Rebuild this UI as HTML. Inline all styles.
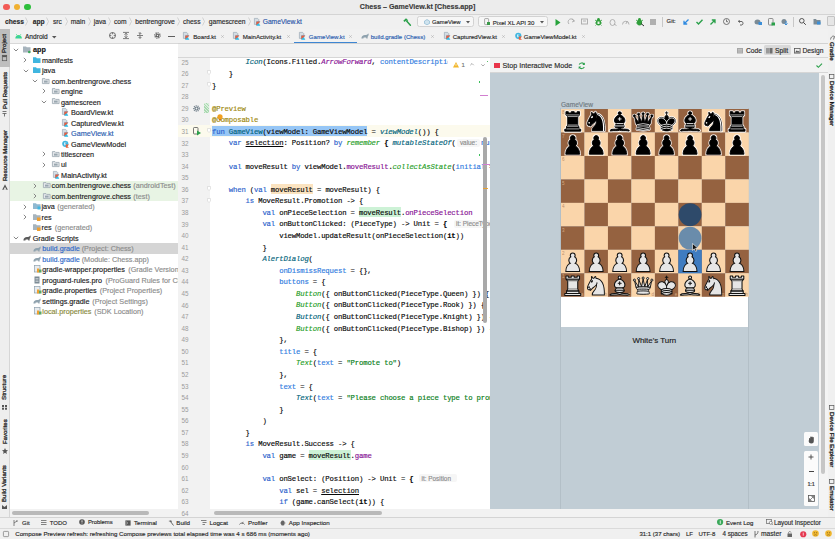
<!DOCTYPE html><html><head><meta charset="utf-8"><style>
*{margin:0;padding:0;box-sizing:border-box}
html,body{width:835px;height:539px;overflow:hidden;background:#f2f2f2}
body{position:relative;font-family:"Liberation Sans",sans-serif;}
.t{position:absolute;white-space:pre;line-height:1;margin-top:0.9px;-webkit-text-stroke:0.15px currentColor}
.v{margin-top:0;-webkit-text-stroke:0.3px currentColor}
.code{position:absolute;left:212px;font-family:"Liberation Mono",monospace;font-size:7.3px;letter-spacing:-0.18px;white-space:pre;color:#080808;line-height:11.56px;height:11.56px;padding-top:1.7px;-webkit-text-stroke:0.15px currentColor}
.k{color:#2b5fcc}.fd{color:#00627a}.an{color:#9e880d}.cg{color:#1f9d1f;font-style:italic}.ct{color:#00627a;font-style:italic}
.pr{color:#871094}.pri{color:#871094;font-style:italic}.na{color:#2f7be0}.st{color:#067d17}.b{font-weight:bold}.u{text-decoration:underline}
.ih{font-family:"Liberation Sans",sans-serif;font-size:6px;color:#8a8a8a;background:#ececec;border-radius:2px;padding:0 1px}
.ln{position:absolute;left:181.5px;width:10px;font-family:"Liberation Sans",sans-serif;font-size:6.3px;color:#9c9c9c;line-height:11.56px;text-align:left;padding-top:0.8px}
svg{position:absolute;overflow:visible}
</style></head><body><div style="position:absolute;left:0px;top:0px;width:835px;height:14.5px;background:#ececec"></div>
<div style="position:absolute;left:0px;top:14px;width:835px;height:0.6px;background:#d4d4d4"></div>
<div style="position:absolute;left:3.1px;top:3.6px;width:6.8px;height:6.8px;border-radius:50%;background:#f25a55"></div>
<div style="position:absolute;left:13.499999999999998px;top:3.6px;width:6.8px;height:6.8px;border-radius:50%;background:#f0b030"></div>
<div style="position:absolute;left:24.0px;top:3.6px;width:6.8px;height:6.8px;border-radius:50%;background:#2dbf3c"></div>
<div class="t " style="left:359.8px;top:3.0px;font-size:7.1px;color:#3a3a3a;font-weight:bold">Chess – GameView.kt [Chess.app]</div>
<div style="position:absolute;left:0px;top:14.5px;width:835px;height:14.5px;background:#f0f0f0"></div>
<div style="position:absolute;left:0px;top:28.6px;width:835px;height:0.8px;background:#d2d2d2"></div>
<div class="t " style="left:5px;top:17.7px;font-size:6.7px;color:#2b2b2b;font-weight:bold">chess</div>
<div class="t " style="left:32.7px;top:17.7px;font-size:6.7px;color:#2b2b2b;font-weight:bold">app</div>
<div class="t " style="left:53px;top:17.7px;font-size:6.7px;color:#2b2b2b;">src</div>
<div class="t " style="left:70.7px;top:17.7px;font-size:6.7px;color:#2b2b2b;">main</div>
<div class="t " style="left:93.8px;top:17.7px;font-size:6.7px;color:#2b2b2b;">java</div>
<div class="t " style="left:114px;top:17.7px;font-size:6.7px;color:#2b2b2b;">com</div>
<div class="t " style="left:135.3px;top:17.7px;font-size:6.7px;color:#2b2b2b;">bentrengrove</div>
<div class="t " style="left:183px;top:17.7px;font-size:6.7px;color:#2b2b2b;">chess</div>
<div class="t " style="left:208.7px;top:17.7px;font-size:6.7px;color:#2b2b2b;">gamescreen</div>
<svg style="left:25.0px;top:17px" width="3" height="9" viewBox="0 0 3 9"><path d="M0.5 0.5 L2.5 4.5 L0.5 8.5" fill="none" stroke="#c4c4c4" stroke-width="0.7"/></svg>
<svg style="left:45.5px;top:17px" width="3" height="9" viewBox="0 0 3 9"><path d="M0.5 0.5 L2.5 4.5 L0.5 8.5" fill="none" stroke="#c4c4c4" stroke-width="0.7"/></svg>
<svg style="left:64.5px;top:17px" width="3" height="9" viewBox="0 0 3 9"><path d="M0.5 0.5 L2.5 4.5 L0.5 8.5" fill="none" stroke="#c4c4c4" stroke-width="0.7"/></svg>
<svg style="left:87.5px;top:17px" width="3" height="9" viewBox="0 0 3 9"><path d="M0.5 0.5 L2.5 4.5 L0.5 8.5" fill="none" stroke="#c4c4c4" stroke-width="0.7"/></svg>
<svg style="left:107.5px;top:17px" width="3" height="9" viewBox="0 0 3 9"><path d="M0.5 0.5 L2.5 4.5 L0.5 8.5" fill="none" stroke="#c4c4c4" stroke-width="0.7"/></svg>
<svg style="left:128.5px;top:17px" width="3" height="9" viewBox="0 0 3 9"><path d="M0.5 0.5 L2.5 4.5 L0.5 8.5" fill="none" stroke="#c4c4c4" stroke-width="0.7"/></svg>
<svg style="left:177.1px;top:17px" width="3" height="9" viewBox="0 0 3 9"><path d="M0.5 0.5 L2.5 4.5 L0.5 8.5" fill="none" stroke="#c4c4c4" stroke-width="0.7"/></svg>
<svg style="left:201.5px;top:17px" width="3" height="9" viewBox="0 0 3 9"><path d="M0.5 0.5 L2.5 4.5 L0.5 8.5" fill="none" stroke="#c4c4c4" stroke-width="0.7"/></svg>
<svg style="left:247.5px;top:17px" width="3" height="9" viewBox="0 0 3 9"><path d="M0.5 0.5 L2.5 4.5 L0.5 8.5" fill="none" stroke="#c4c4c4" stroke-width="0.7"/></svg>
<svg style="left:254px;top:17.5px" width="6.5" height="8" viewBox="0 0 6.5 8"><path d="M0.4 0.4 H3.6 L4.8 1.6 V6.4 H0.4Z" fill="#d5dde3" stroke="#8ea0ad" stroke-width="0.6"/><path d="M2.3 3.6 H6.3 L4.3 5.6 L6.3 7.6 H2.3Z" fill="#2d9be8"/><path d="M2.3 3.6 H6.3 L2.3 7.6Z" fill="#e8603c"/><path d="M2.3 7.6 L4.3 5.6 L6.3 7.6Z" fill="#27c7e8"/></svg>
<div class="t " style="left:262.7px;top:17.7px;font-size:6.7px;color:#2a56a8;">GameView.kt</div>
<svg style="left:403px;top:17.5px" width="8" height="8" viewBox="0 0 8 8"><path d="M0.3 2.8 L3 0.3 L5.2 2.3 L4.4 3.1 L3.4 2.3 L1.6 4Z" fill="#2aa04a"/><path d="M3.6 3 L7.4 7.3" stroke="#2aa04a" stroke-width="1.5" stroke-linecap="round"/></svg>
<div style="position:absolute;left:417px;top:16px;width:57px;height:11px;background:#f7f7f7;border:0.6px solid #d2d2d2;border-radius:2.5px"></div>
<svg style="left:423.5px;top:18.5px" width="6" height="6" viewBox="0 0 6 6"><path d="M3 0.5 L5.5 2 V4.5 L3 5.8 L0.5 4.5 V2Z" fill="#cfe3ee" stroke="#7eb0cc" stroke-width="0.6"/></svg>
<div class="t " style="left:432px;top:19.0px;font-size:5.87px;color:#2b2b2b;">GameView</div>
<svg style="left:465.5px;top:20.5px" width="4" height="3" viewBox="0 0 4 3"><path d="M0 0 H4 L2 2.5Z" fill="#555"/></svg>
<div style="position:absolute;left:477.7px;top:16px;width:70px;height:11px;background:#f7f7f7;border:0.6px solid #d2d2d2;border-radius:2.5px"></div>
<svg style="left:484px;top:18px" width="6" height="7" viewBox="0 0 6 7"><rect x="0.6" y="0.6" width="4" height="6" rx="0.6" fill="none" stroke="#888" stroke-width="0.7"/><rect x="3" y="4" width="3" height="3" fill="#3b9a4a"/></svg>
<div class="t " style="left:492.8px;top:18.7px;font-size:6.07px;color:#2b2b2b;">Pixel XL API 30</div>
<svg style="left:539.5px;top:20.5px" width="4" height="3" viewBox="0 0 4 3"><path d="M0 0 H4 L2 2.5Z" fill="#555"/></svg>
<svg style="left:554.5px;top:18.5px" width="6" height="7" viewBox="0 0 6 7"><path d="M0.5 0 L5.5 3.5 L0.5 7Z" fill="#28a33c"/></svg>
<svg style="left:567.5px;top:18px" width="7" height="7" viewBox="0 0 7 7"><path d="M1 6 A3 3 0 1 1 6 3" fill="none" stroke="#a9a9a9" stroke-width="0.9"/><path d="M4 1 L6.5 3 L4 4" fill="none" stroke="#a9a9a9" stroke-width="0.9"/></svg>
<svg style="left:581px;top:18px" width="7" height="7" viewBox="0 0 7 7"><rect x="0.5" y="1" width="6" height="5" fill="none" stroke="#a9a9a9" stroke-width="0.9"/><path d="M2 3 H5" stroke="#a9a9a9" stroke-width="0.9"/></svg>
<svg style="left:594.5px;top:17.5px" width="7" height="8" viewBox="0 0 7 8"><ellipse cx="3.5" cy="4.5" rx="2.6" ry="3" fill="#2f9e3a"/><path d="M0 2 L1.5 3 M7 2 L5.5 3 M0 5 H1 M7 5 H6 M0.5 7.5 L1.5 6.5 M6.5 7.5 L5.5 6.5" stroke="#2f9e3a" stroke-width="0.8"/><circle cx="3.5" cy="1.2" r="1.3" fill="#2f9e3a"/><rect x="2.5" y="3.5" width="2" height="2.5" fill="#e8f5e8"/></svg>
<svg style="left:608.5px;top:17.5px" width="8" height="8" viewBox="0 0 8 8"><ellipse cx="3.5" cy="4.5" rx="2.5" ry="3" fill="none" stroke="#a9a9a9" stroke-width="0.9"/><path d="M5 6 L7.5 7.5" stroke="#a9a9a9" stroke-width="0.9"/></svg>
<svg style="left:622px;top:18.5px" width="8" height="6" viewBox="0 0 8 6"><path d="M0.5 5.5 A3.2 3.2 0 0 1 7 5.5" fill="none" stroke="#a9a9a9" stroke-width="0.9"/><path d="M3.8 5 L5.5 2" stroke="#a9a9a9" stroke-width="0.9"/></svg>
<svg style="left:635.5px;top:17.5px" width="8" height="8" viewBox="0 0 8 8"><ellipse cx="3.5" cy="4.5" rx="2.6" ry="3" fill="#2f9e3a"/><circle cx="3.5" cy="1.2" r="1.3" fill="#2f9e3a"/><path d="M0 2 L1.5 3 M7 2 L5.5 3 M0 5 H1" stroke="#2f9e3a" stroke-width="0.8"/><path d="M5 5.5 L8 8" stroke="#333" stroke-width="1"/></svg>
<div style="position:absolute;left:649.5px;top:18.5px;width:6.5px;height:6.5px;background:#b0b0b0"></div>
<div style="position:absolute;left:661.5px;top:16.5px;width:0.6px;height:10px;background:#c8c8c8"></div>
<div class="t " style="left:666.6px;top:18.5px;font-size:5.85px;color:#2b2b2b;">Git:</div>
<svg style="left:682.5px;top:18.5px" width="6" height="6" viewBox="0 0 6 6"><path d="M5.5 0.5 L1 5 M1 1.8 V5 H4.2" fill="none" stroke="#2f8ae0" stroke-width="1.3"/></svg>
<svg style="left:696px;top:18.5px" width="7" height="6" viewBox="0 0 7 6"><path d="M0.5 3 L2.5 5 L6.5 0.8" fill="none" stroke="#2aa04a" stroke-width="1.4"/></svg>
<svg style="left:710px;top:18.5px" width="6" height="6" viewBox="0 0 6 6"><path d="M0.5 5.5 L5 1 M1.8 1 H5 V4.2" fill="none" stroke="#2aa04a" stroke-width="1.3"/></svg>
<svg style="left:723px;top:18px" width="7" height="7" viewBox="0 0 7 7"><circle cx="3.5" cy="3.5" r="3" fill="none" stroke="#555" stroke-width="0.8"/><path d="M3.5 1.5 V3.7 H5" fill="none" stroke="#555" stroke-width="0.8"/></svg>
<svg style="left:737.5px;top:18.5px" width="7" height="6" viewBox="0 0 7 6"><path d="M1.5 1 L0.5 2.5 L2 3.5 M0.6 2.5 H4 A2 2 0 0 1 4 6 H2" fill="none" stroke="#555" stroke-width="0.9"/></svg>
<svg style="left:754px;top:18px" width="8" height="7" viewBox="0 0 8 7"><ellipse cx="3.5" cy="4" rx="3" ry="2.5" fill="#7c8b95"/><rect x="4.5" y="4" width="3.5" height="3" fill="#3c8fd8"/></svg>
<svg style="left:768px;top:17.5px" width="7" height="8" viewBox="0 0 7 8"><rect x="0.5" y="0.5" width="4.5" height="6.5" rx="0.8" fill="none" stroke="#777" stroke-width="0.8"/><rect x="3.5" y="4.5" width="3.5" height="3" fill="#2aa04a"/></svg>
<svg style="left:781px;top:17.5px" width="8" height="8" viewBox="0 0 8 8"><circle cx="3" cy="3.5" r="2.5" fill="#7c8b95"/><path d="M5 3 V7 M3.5 5.5 L5 7 L6.5 5.5" fill="none" stroke="#3c8fd8" stroke-width="1"/></svg>
<div style="position:absolute;left:793.3px;top:16.5px;width:0.6px;height:10px;background:#c8c8c8"></div>
<svg style="left:798.5px;top:18px" width="7" height="7" viewBox="0 0 7 7"><circle cx="2.8" cy="2.8" r="2.3" fill="none" stroke="#444" stroke-width="0.9"/><path d="M4.5 4.5 L6.8 6.8" stroke="#444" stroke-width="1"/></svg>
<svg style="left:812.5px;top:18px" width="8" height="7" viewBox="0 0 8 7"><path d="M0.5 1 H3 L3.7 2 H7.5 V6.5 H0.5Z" fill="#7c8b95"/><rect x="4" y="3.5" width="3.5" height="3" fill="#3c8fd8"/></svg>
<div style="position:absolute;left:826.5px;top:16px;width:8.5px;height:10px;background:#e6e6e6;border:0.6px solid #c4c4c4;border-radius:1px"></div>
<div style="position:absolute;left:0px;top:29.4px;width:10px;height:488px;background:#eeeeee"></div>
<div style="position:absolute;left:9.4px;top:29.4px;width:0.8px;height:488px;background:#d6d6d6"></div>
<div style="position:absolute;left:0px;top:29.2px;width:9.6px;height:37.5px;background:#bebebe"></div>
<div class="t v" style="left:1.4500000000000002px;top:52.8px;font-size:6.1px;color:#2a2a2a;transform-origin:0 0;transform:rotate(-90deg)">Project</div>
<svg style="left:2.2px;top:54.5px" width="5" height="6" viewBox="0 0 5 6"><rect x="0.3" y="0.3" width="4.4" height="5.4" fill="none" stroke="#555" stroke-width="0.7"/><rect x="0.3" y="0.3" width="4.4" height="1.8" fill="#555"/></svg>
<div class="t v" style="left:1.5px;top:109.3px;font-size:6.0px;color:#2a2a2a;transform-origin:0 0;transform:rotate(-90deg)">Pull Requests</div>
<svg style="left:2px;top:111.3px" width="5" height="6" viewBox="0 0 5 6"><path d="M0.5 0.5 H4.5 M0.5 2.5 H4.5 M2.5 2.5 V5.5" stroke="#555" stroke-width="0.8"/></svg>
<div class="t v" style="left:1.5px;top:181px;font-size:6.0px;color:#2a2a2a;transform-origin:0 0;transform:rotate(-90deg)">Resource Manager</div>
<svg style="left:1.5px;top:184px" width="6" height="6" viewBox="0 0 6 6"><path d="M3 0.3 L5.8 5.7 H0.2Z" fill="#555"/><path d="M3 3 L1.5 5.7 H4.5Z" fill="#f0f0f0"/></svg>
<div class="t v" style="left:1.4px;top:399.8px;font-size:6.2px;color:#2a2a2a;transform-origin:0 0;transform:rotate(-90deg)">Structure</div>
<svg style="left:2px;top:405px" width="5" height="4.5" viewBox="0 0 5 4.5"><rect x="0" y="0" width="2" height="2" fill="#555"/><rect x="3" y="0" width="2" height="2" fill="#555"/><rect x="0" y="2.7" width="2" height="2" fill="#555"/><rect x="3" y="2.7" width="2" height="2" fill="#555"/></svg>
<div class="t v" style="left:1.5px;top:444.2px;font-size:6.0px;color:#2a2a2a;transform-origin:0 0;transform:rotate(-90deg)">Favorites</div>
<svg style="left:1.8px;top:447.5px" width="6" height="6" viewBox="0 0 6 6"><path d="M3 0 L3.9 2.1 L6 2.3 L4.4 3.7 L4.9 6 L3 4.8 L1.1 6 L1.6 3.7 L0 2.3 L2.1 2.1Z" fill="#555"/></svg>
<div class="t v" style="left:1.475px;top:501.7px;font-size:6.05px;color:#2a2a2a;transform-origin:0 0;transform:rotate(-90deg)">Build Variants</div>
<svg style="left:2px;top:504.7px" width="5" height="4" viewBox="0 0 5 4"><path d="M0 0 L2.5 2 L5 0 V4 H0Z" fill="#555"/></svg>
<div style="position:absolute;left:10.2px;top:29.4px;width:168px;height:14.1px;background:#f1f1f1"></div>
<div style="position:absolute;left:10.2px;top:43.2px;width:168px;height:0.6px;background:#d8d8d8"></div>
<svg style="left:15px;top:34.2px" width="7.2" height="4.8" viewBox="0 0 7.2 4.8"><path d="M0.3 4.6 C0.3 2.3 1.8 1 3.6 1 C5.4 1 6.9 2.3 6.9 4.6Z" fill="#3ddc84"/><path d="M1.2 0 L2 1.3 M6 0 L5.2 1.3" stroke="#3ddc84" stroke-width="0.6"/><circle cx="2.4" cy="3.2" r="0.6" fill="#40a8e0"/><circle cx="4.8" cy="3.2" r="0.6" fill="#40a8e0"/></svg>
<div class="t " style="left:24.9px;top:33.0px;font-size:6.64px;color:#2b2b2b;">Android</div>
<svg style="left:52px;top:36px" width="5" height="3" viewBox="0 0 5 3"><path d="M0 0 H4.5 L2.25 2.5Z" fill="#555"/></svg>
<svg style="left:109px;top:32.4px" width="7" height="7" viewBox="0 0 7 7"><circle cx="3.5" cy="3.5" r="3" fill="none" stroke="#5f5f5f" stroke-width="0.9"/><path d="M3.5 0.5 V2.3 M3.5 4.7 V6.5 M0.5 3.5 H2.3 M4.7 3.5 H6.5" stroke="#5f5f5f" stroke-width="0.8"/></svg>
<svg style="left:123px;top:32.4px" width="6" height="7" viewBox="0 0 6 7"><path d="M0 0.4 H6 M0 6.6 H6 M3 1.2 V5.8 M1.5 2.7 L3 1.2 L4.5 2.7 M1.5 4.3 L3 5.8 L4.5 4.3" fill="none" stroke="#5f5f5f" stroke-width="0.8"/></svg>
<svg style="left:137px;top:32.4px" width="6" height="7" viewBox="0 0 6 7"><path d="M0 3.5 H6 M3 0 V2.4 M1.6 1 L3 2.4 L4.4 1 M3 7 V4.6 M1.6 6 L3 4.6 L4.4 6" fill="none" stroke="#5f5f5f" stroke-width="0.8"/></svg>
<svg style="left:153.5px;top:32.3px" width="7" height="7" viewBox="0 0 7 7"><circle cx="3.5" cy="3.5" r="1.3" fill="none" stroke="#5f5f5f" stroke-width="1.1"/><circle cx="3.5" cy="3.5" r="2.6" fill="none" stroke="#5f5f5f" stroke-width="1.4" stroke-dasharray="1.1 0.9"/></svg>
<div style="position:absolute;left:168px;top:35.6px;width:6.5px;height:0.9px;background:#5f5f5f"></div>
<div style="position:absolute;left:10.2px;top:43.8px;width:168px;height:465.6px;background:#ffffff"></div>
<div style="position:absolute;left:10.2px;top:509.4px;width:168px;height:7.8px;background:#f2f2f2"></div>
<div style="position:absolute;left:12.2px;top:511px;width:136.5px;height:3.8px;background:#b9b9b9;border-radius:2px"></div>
<div style="position:absolute;left:10.2px;top:180.51000000000002px;width:168px;height:20.94px;background:#e8f4e4"></div>
<div style="position:absolute;left:10.2px;top:243.43px;width:168px;height:10.47px;background:#d5d5d5"></div>
<svg style="left:13.3px;top:47.6px" width="6" height="4" viewBox="0 0 6 4"><path d="M0.8 0.8 L3 3 L5.2 0.8" fill="none" stroke="#7a7a7a" stroke-width="0.9"/></svg>
<svg style="left:23.2px;top:45.800000000000004px" width="8" height="7.5" viewBox="0 0 8 7.5"><path d="M0 0.5 H3 L3.8 1.3 H7.5 V6.5 H0Z" fill="#a7b4bd"/><circle cx="6.3" cy="6" r="1.3" fill="#3aa85a"/></svg>
<div class="t " style="left:33px;top:45.4px;font-size:7.25px;color:#111;font-weight:bold">app</div>
<svg style="left:23px;top:57.07px" width="4" height="6" viewBox="0 0 4 6"><path d="M0.8 0.8 L3 3 L0.8 5.2" fill="none" stroke="#7a7a7a" stroke-width="0.9"/></svg>
<svg style="left:32.7px;top:56.57px" width="7.5" height="6" viewBox="0 0 7.5 6"><path d="M0 0.3 H3 L3.8 1.2 H7.5 V6 H0 Z" fill="#40b6e0"/></svg>
<div class="t " style="left:41.9px;top:55.87px;font-size:7.25px;color:#222;">manifests</div>
<svg style="left:22.6px;top:68.54px" width="6" height="4" viewBox="0 0 6 4"><path d="M0.8 0.8 L3 3 L5.2 0.8" fill="none" stroke="#7a7a7a" stroke-width="0.9"/></svg>
<svg style="left:32.7px;top:67.04px" width="7.5" height="6" viewBox="0 0 7.5 6"><path d="M0 0.3 H3 L3.8 1.2 H7.5 V6 H0 Z" fill="#40b6e0"/></svg>
<div class="t " style="left:41.9px;top:66.34px;font-size:7.25px;color:#222;">java</div>
<svg style="left:32.2px;top:79.01px" width="6" height="4" viewBox="0 0 6 4"><path d="M0.8 0.8 L3 3 L5.2 0.8" fill="none" stroke="#7a7a7a" stroke-width="0.9"/></svg>
<svg style="left:42.3px;top:77.51px" width="7.5" height="6" viewBox="0 0 7.5 6"><path d="M0.4 0.6 H3 L3.7 1.4 H7.1 V5.6 H0.4 Z" fill="#e3e6ea" stroke="#9aa7b0" stroke-width="0.8"/><rect x="2" y="2.6" width="3.6" height="2" fill="#9aa7b0"/></svg>
<div class="t " style="left:51.7px;top:76.81px;font-size:7.25px;color:#222;">com.bentrengrove.chess</div>
<svg style="left:42.3px;top:88.48px" width="4" height="6" viewBox="0 0 4 6"><path d="M0.8 0.8 L3 3 L0.8 5.2" fill="none" stroke="#7a7a7a" stroke-width="0.9"/></svg>
<svg style="left:52.1px;top:87.98px" width="7.5" height="6" viewBox="0 0 7.5 6"><path d="M0.4 0.6 H3 L3.7 1.4 H7.1 V5.6 H0.4 Z" fill="#e3e6ea" stroke="#9aa7b0" stroke-width="0.8"/><rect x="2" y="2.6" width="3.6" height="2" fill="#9aa7b0"/></svg>
<div class="t " style="left:61px;top:87.28px;font-size:7.25px;color:#222;">engine</div>
<svg style="left:41.3px;top:99.95px" width="6" height="4" viewBox="0 0 6 4"><path d="M0.8 0.8 L3 3 L5.2 0.8" fill="none" stroke="#7a7a7a" stroke-width="0.9"/></svg>
<svg style="left:52.1px;top:98.45px" width="7.5" height="6" viewBox="0 0 7.5 6"><path d="M0.4 0.6 H3 L3.7 1.4 H7.1 V5.6 H0.4 Z" fill="#e3e6ea" stroke="#9aa7b0" stroke-width="0.8"/><rect x="2" y="2.6" width="3.6" height="2" fill="#9aa7b0"/></svg>
<div class="t " style="left:61px;top:97.75px;font-size:7.25px;color:#222;">gamescreen</div>
<svg style="left:62px;top:108.42000000000002px" width="6.5" height="8" viewBox="0 0 6.5 8"><path d="M0.4 0.4 H3.6 L4.8 1.6 V6.4 H0.4Z" fill="#d5dde3" stroke="#8ea0ad" stroke-width="0.6"/><path d="M2.3 3.6 H6.3 L4.3 5.6 L6.3 7.6 H2.3Z" fill="#2d9be8"/><path d="M2.3 3.6 H6.3 L2.3 7.6Z" fill="#e8603c"/><path d="M2.3 7.6 L4.3 5.6 L6.3 7.6Z" fill="#27c7e8"/></svg>
<div class="t " style="left:71px;top:108.22000000000001px;font-size:7.25px;color:#222;">BoardView.kt</div>
<svg style="left:62px;top:118.89000000000001px" width="6.5" height="8" viewBox="0 0 6.5 8"><path d="M0.4 0.4 H3.6 L4.8 1.6 V6.4 H0.4Z" fill="#d5dde3" stroke="#8ea0ad" stroke-width="0.6"/><path d="M2.3 3.6 H6.3 L4.3 5.6 L6.3 7.6 H2.3Z" fill="#2d9be8"/><path d="M2.3 3.6 H6.3 L2.3 7.6Z" fill="#e8603c"/><path d="M2.3 7.6 L4.3 5.6 L6.3 7.6Z" fill="#27c7e8"/></svg>
<div class="t " style="left:71px;top:118.69000000000001px;font-size:7.25px;color:#222;">CapturedView.kt</div>
<svg style="left:62px;top:129.36px" width="6.5" height="8" viewBox="0 0 6.5 8"><path d="M0.4 0.4 H3.6 L4.8 1.6 V6.4 H0.4Z" fill="#d5dde3" stroke="#8ea0ad" stroke-width="0.6"/><path d="M2.3 3.6 H6.3 L4.3 5.6 L6.3 7.6 H2.3Z" fill="#2d9be8"/><path d="M2.3 3.6 H6.3 L2.3 7.6Z" fill="#e8603c"/><path d="M2.3 7.6 L4.3 5.6 L6.3 7.6Z" fill="#27c7e8"/></svg>
<div class="t " style="left:71px;top:129.16000000000003px;font-size:7.25px;color:#2a5db0;">GameView.kt</div>
<svg style="left:62px;top:139.83px" width="7" height="8" viewBox="0 0 7 8"><circle cx="3.3" cy="3.8" r="3.1" fill="#40b6e0"/><path d="M2.5 2.3 V5.3 M2.5 3.8 L4.3 2.3 M2.5 3.8 L4.3 5.3" stroke="#fff" stroke-width="0.6" fill="none"/><path d="M3.8 4.6 H7 L5.4 6.2 L7 7.8 H3.8Z" fill="#e8603c"/></svg>
<div class="t " style="left:71px;top:139.63000000000002px;font-size:7.25px;color:#222;">GameViewModel</div>
<svg style="left:42.3px;top:151.3px" width="4" height="6" viewBox="0 0 4 6"><path d="M0.8 0.8 L3 3 L0.8 5.2" fill="none" stroke="#7a7a7a" stroke-width="0.9"/></svg>
<svg style="left:52.1px;top:150.8px" width="7.5" height="6" viewBox="0 0 7.5 6"><path d="M0.4 0.6 H3 L3.7 1.4 H7.1 V5.6 H0.4 Z" fill="#e3e6ea" stroke="#9aa7b0" stroke-width="0.8"/><rect x="2" y="2.6" width="3.6" height="2" fill="#9aa7b0"/></svg>
<div class="t " style="left:61px;top:150.10000000000002px;font-size:7.25px;color:#222;">titlescreen</div>
<svg style="left:42.3px;top:161.77px" width="4" height="6" viewBox="0 0 4 6"><path d="M0.8 0.8 L3 3 L0.8 5.2" fill="none" stroke="#7a7a7a" stroke-width="0.9"/></svg>
<svg style="left:52.1px;top:161.27px" width="7.5" height="6" viewBox="0 0 7.5 6"><path d="M0.4 0.6 H3 L3.7 1.4 H7.1 V5.6 H0.4 Z" fill="#e3e6ea" stroke="#9aa7b0" stroke-width="0.8"/><rect x="2" y="2.6" width="3.6" height="2" fill="#9aa7b0"/></svg>
<div class="t " style="left:61px;top:160.57000000000002px;font-size:7.25px;color:#222;">ui</div>
<svg style="left:52.8px;top:171.24px" width="6.5" height="8" viewBox="0 0 6.5 8"><path d="M0.4 0.4 H3.6 L4.8 1.6 V6.4 H0.4Z" fill="#d5dde3" stroke="#8ea0ad" stroke-width="0.6"/><path d="M2.3 3.6 H6.3 L4.3 5.6 L6.3 7.6 H2.3Z" fill="#2d9be8"/><path d="M2.3 3.6 H6.3 L2.3 7.6Z" fill="#e8603c"/><path d="M2.3 7.6 L4.3 5.6 L6.3 7.6Z" fill="#27c7e8"/></svg>
<div class="t " style="left:61.1px;top:171.04000000000002px;font-size:7.25px;color:#222;">MainActivity.kt</div>
<svg style="left:33.2px;top:182.71px" width="4" height="6" viewBox="0 0 4 6"><path d="M0.8 0.8 L3 3 L0.8 5.2" fill="none" stroke="#7a7a7a" stroke-width="0.9"/></svg>
<svg style="left:42.8px;top:182.21px" width="7.5" height="6" viewBox="0 0 7.5 6"><path d="M0.4 0.6 H3 L3.7 1.4 H7.1 V5.6 H0.4 Z" fill="#e3e6ea" stroke="#9aa7b0" stroke-width="0.8"/><rect x="2" y="2.6" width="3.6" height="2" fill="#9aa7b0"/></svg>
<div class="t " style="left:51.6px;top:181.51000000000002px;font-size:7.25px;color:#222;">com.bentrengrove.chess</div><div class="t " style="left:133.3px;top:181.51000000000002px;font-size:7.25px;color:#8c8c8c;">(androidTest)</div>
<svg style="left:33.2px;top:193.18px" width="4" height="6" viewBox="0 0 4 6"><path d="M0.8 0.8 L3 3 L0.8 5.2" fill="none" stroke="#7a7a7a" stroke-width="0.9"/></svg>
<svg style="left:42.8px;top:192.68px" width="7.5" height="6" viewBox="0 0 7.5 6"><path d="M0.4 0.6 H3 L3.7 1.4 H7.1 V5.6 H0.4 Z" fill="#e3e6ea" stroke="#9aa7b0" stroke-width="0.8"/><rect x="2" y="2.6" width="3.6" height="2" fill="#9aa7b0"/></svg>
<div class="t " style="left:51.6px;top:191.98000000000002px;font-size:7.25px;color:#222;">com.bentrengrove.chess</div><div class="t " style="left:133.3px;top:191.98000000000002px;font-size:7.25px;color:#8c8c8c;">(test)</div>
<svg style="left:23.2px;top:203.65px" width="4" height="6" viewBox="0 0 4 6"><path d="M0.8 0.8 L3 3 L0.8 5.2" fill="none" stroke="#7a7a7a" stroke-width="0.9"/></svg>
<svg style="left:32.7px;top:203.15px" width="8" height="7" viewBox="0 0 8 7"><path d="M0 0.3 H3 L3.8 1.2 H7.5 V6 H0Z" fill="#8fb8d0"/><rect x="4.5" y="3.5" width="3" height="3" fill="#40b6e0"/></svg>
<div class="t " style="left:41.5px;top:202.45000000000002px;font-size:7.25px;color:#222;">java</div><div class="t " style="left:57.3px;top:202.45000000000002px;font-size:7.25px;color:#8c8c8c;">(generated)</div>
<svg style="left:23.2px;top:214.12px" width="4" height="6" viewBox="0 0 4 6"><path d="M0.8 0.8 L3 3 L0.8 5.2" fill="none" stroke="#7a7a7a" stroke-width="0.9"/></svg>
<svg style="left:32.7px;top:213.62px" width="8" height="7" viewBox="0 0 8 7"><path d="M0 0.3 H3 L3.8 1.2 H7.5 V6 H0Z" fill="#a7b4bd"/><rect x="4" y="3.5" width="3.5" height="3.5" fill="#f0a030"/></svg>
<div class="t " style="left:41.5px;top:212.92000000000002px;font-size:7.25px;color:#222;">res</div>
<svg style="left:32.7px;top:224.09px" width="8" height="7" viewBox="0 0 8 7"><path d="M0 0.3 H3 L3.8 1.2 H7.5 V6 H0Z" fill="#a7b4bd"/><rect x="4" y="3.5" width="3.5" height="3.5" fill="#f0a030"/></svg>
<div class="t " style="left:41.5px;top:223.39000000000001px;font-size:7.25px;color:#222;">res</div><div class="t " style="left:54.8px;top:223.39000000000001px;font-size:7.25px;color:#8c8c8c;">(generated)</div>
<svg style="left:13.3px;top:236.06px" width="6" height="4" viewBox="0 0 6 4"><path d="M0.8 0.8 L3 3 L5.2 0.8" fill="none" stroke="#7a7a7a" stroke-width="0.9"/></svg>
<svg style="left:23.1px;top:235.06px" width="8" height="6" viewBox="0 0 8 6"><path d="M0.4 5.6 C0.4 3.2 1.9 1.9 4 1.9 C5.3 1.9 6.2 2.2 6.6 1.1 L7.6 0.5 C7.9 1.9 7.2 3.1 6.6 3.7 L6.6 5.6 H5.4 L5.1 4.4 H2.7 L2.4 5.6Z" fill="#5a5a5a"/></svg>
<div class="t " style="left:32.7px;top:233.86px;font-size:7.25px;color:#222;">Gradle Scripts</div>
<svg style="left:32.7px;top:245.53px" width="8" height="6" viewBox="0 0 8 6"><path d="M0.4 5.6 C0.4 3.2 1.9 1.9 4 1.9 C5.3 1.9 6.2 2.2 6.6 1.1 L7.6 0.5 C7.9 1.9 7.2 3.1 6.6 3.7 L6.6 5.6 H5.4 L5.1 4.4 H2.7 L2.4 5.6Z" fill="#8fa2ae"/></svg>
<div class="t " style="left:42.3px;top:244.33px;font-size:7.25px;color:#2f68c8;">build.gradle</div><div class="t " style="left:81.7px;top:244.33px;font-size:7.25px;color:#8c8c8c;">(Project: Chess)</div>
<svg style="left:32.7px;top:256.0px" width="8" height="6" viewBox="0 0 8 6"><path d="M0.4 5.6 C0.4 3.2 1.9 1.9 4 1.9 C5.3 1.9 6.2 2.2 6.6 1.1 L7.6 0.5 C7.9 1.9 7.2 3.1 6.6 3.7 L6.6 5.6 H5.4 L5.1 4.4 H2.7 L2.4 5.6Z" fill="#8fa2ae"/></svg>
<div class="t " style="left:42.3px;top:254.8px;font-size:7.25px;color:#2f68c8;">build.gradle</div><div class="t " style="left:81.7px;top:254.8px;font-size:7.25px;color:#8c8c8c;">(Module: Chess.app)</div>
<svg style="left:34px;top:265.47px" width="8" height="8" viewBox="0 0 8 8"><rect x="0.5" y="0.5" width="5.5" height="6.5" fill="#e8ecef" stroke="#8ea0ad" stroke-width="0.7"/><rect x="3" y="3.5" width="2" height="4" fill="#f0a030"/><rect x="5" y="4.5" width="2.5" height="3" fill="#59a869"/></svg>
<div class="t " style="left:42.3px;top:265.27000000000004px;font-size:7.25px;color:#222;">gradle-wrapper.properties</div><div class="t " style="left:128.3px;top:265.27000000000004px;font-size:7.25px;color:#8c8c8c;">(Gradle Version</div>
<svg style="left:34px;top:275.94px" width="6" height="8" viewBox="0 0 6 8"><rect x="0.5" y="0.5" width="5" height="7" fill="#7c8b95"/><path d="M1.5 2.5 H4.5 M1.5 4 H4.5 M1.5 5.5 H4.5" stroke="#fff" stroke-width="0.5"/></svg>
<div class="t " style="left:42.3px;top:275.74px;font-size:7.25px;color:#222;">proguard-rules.pro</div><div class="t " style="left:105.6px;top:275.74px;font-size:7.25px;color:#8c8c8c;">(ProGuard Rules for Chess.app)</div>
<svg style="left:34px;top:286.41px" width="8" height="8" viewBox="0 0 8 8"><rect x="0.5" y="0.5" width="5.5" height="6.5" fill="#e8ecef" stroke="#8ea0ad" stroke-width="0.7"/><rect x="3" y="3.5" width="2" height="4" fill="#f0a030"/><rect x="5" y="4.5" width="2.5" height="3" fill="#59a869"/></svg>
<div class="t " style="left:42.3px;top:286.21000000000004px;font-size:7.25px;color:#222;">gradle.properties</div><div class="t " style="left:99.8px;top:286.21000000000004px;font-size:7.25px;color:#8c8c8c;">(Project Properties)</div>
<svg style="left:32.7px;top:297.88000000000005px" width="8" height="6" viewBox="0 0 8 6"><path d="M0.4 5.6 C0.4 3.2 1.9 1.9 4 1.9 C5.3 1.9 6.2 2.2 6.6 1.1 L7.6 0.5 C7.9 1.9 7.2 3.1 6.6 3.7 L6.6 5.6 H5.4 L5.1 4.4 H2.7 L2.4 5.6Z" fill="#8fa2ae"/></svg>
<div class="t " style="left:42.3px;top:296.68000000000006px;font-size:7.25px;color:#222;">settings.gradle</div><div class="t " style="left:92.3px;top:296.68000000000006px;font-size:7.25px;color:#8c8c8c;">(Project Settings)</div>
<svg style="left:34px;top:307.35px" width="8" height="8" viewBox="0 0 8 8"><rect x="0.5" y="0.5" width="5.5" height="6.5" fill="#e8ecef" stroke="#8ea0ad" stroke-width="0.7"/><rect x="3" y="3.5" width="2" height="4" fill="#f0a030"/><rect x="5" y="4.5" width="2.5" height="3" fill="#59a869"/></svg>
<div class="t " style="left:42.3px;top:307.15000000000003px;font-size:7.25px;color:#8a8a3c;">local.properties</div><div class="t " style="left:94.3px;top:307.15000000000003px;font-size:7.25px;color:#8c8c8c;">(SDK Location)</div>
<div style="position:absolute;left:177.6px;top:29px;width:0.8px;height:488px;background:#d4d4d4"></div>
<div style="position:absolute;left:178.4px;top:29.4px;width:649.6px;height:13.9px;background:#f1f1f1"></div>
<div style="position:absolute;left:178.4px;top:43px;width:649.6px;height:0.6px;background:#d2d2d2"></div>
<svg style="left:183.2px;top:32.2px" width="6.5" height="8" viewBox="0 0 6.5 8"><path d="M0.4 0.4 H3.6 L4.8 1.6 V6.4 H0.4Z" fill="#d5dde3" stroke="#8ea0ad" stroke-width="0.6"/><path d="M2.3 3.6 H6.3 L4.3 5.6 L6.3 7.6 H2.3Z" fill="#2d9be8"/><path d="M2.3 3.6 H6.3 L2.3 7.6Z" fill="#e8603c"/><path d="M2.3 7.6 L4.3 5.6 L6.3 7.6Z" fill="#27c7e8"/></svg>
<div class="t " style="left:193.3px;top:32.9px;font-size:6.1px;color:#2b2b2b;">Board.kt</div>
<svg style="left:220.5px;top:34.7px" width="3" height="3" viewBox="0 0 3 3"><path d="M0.2 0.2 L2.8 2.8 M2.8 0.2 L0.2 2.8" stroke="#b0b0b0" stroke-width="0.6"/></svg>
<svg style="left:233px;top:32.2px" width="6.5" height="8" viewBox="0 0 6.5 8"><path d="M0.4 0.4 H3.6 L4.8 1.6 V6.4 H0.4Z" fill="#d5dde3" stroke="#8ea0ad" stroke-width="0.6"/><path d="M2.3 3.6 H6.3 L4.3 5.6 L6.3 7.6 H2.3Z" fill="#2d9be8"/><path d="M2.3 3.6 H6.3 L2.3 7.6Z" fill="#e8603c"/><path d="M2.3 7.6 L4.3 5.6 L6.3 7.6Z" fill="#27c7e8"/></svg>
<div class="t " style="left:242.7px;top:32.9px;font-size:6.1px;color:#2b2b2b;">MainActivity.kt</div>
<svg style="left:287.0px;top:34.7px" width="3" height="3" viewBox="0 0 3 3"><path d="M0.2 0.2 L2.8 2.8 M2.8 0.2 L0.2 2.8" stroke="#b0b0b0" stroke-width="0.6"/></svg>
<svg style="left:299px;top:32.2px" width="6.5" height="8" viewBox="0 0 6.5 8"><path d="M0.4 0.4 H3.6 L4.8 1.6 V6.4 H0.4Z" fill="#d5dde3" stroke="#8ea0ad" stroke-width="0.6"/><path d="M2.3 3.6 H6.3 L4.3 5.6 L6.3 7.6 H2.3Z" fill="#2d9be8"/><path d="M2.3 3.6 H6.3 L2.3 7.6Z" fill="#e8603c"/><path d="M2.3 7.6 L4.3 5.6 L6.3 7.6Z" fill="#27c7e8"/></svg>
<div class="t " style="left:308.8px;top:32.9px;font-size:6.1px;color:#2a5db0;">GameView.kt</div>
<svg style="left:349.0px;top:34.7px" width="3" height="3" viewBox="0 0 3 3"><path d="M0.2 0.2 L2.8 2.8 M2.8 0.2 L0.2 2.8" stroke="#b0b0b0" stroke-width="0.6"/></svg>
<svg style="left:361px;top:33.2px" width="8" height="6" viewBox="0 0 8 6"><path d="M0.4 5.6 C0.4 3.2 1.9 1.9 4 1.9 C5.3 1.9 6.2 2.2 6.6 1.1 L7.6 0.5 C7.9 1.9 7.2 3.1 6.6 3.7 L6.6 5.6 H5.4 L5.1 4.4 H2.7 L2.4 5.6Z" fill="#8fa2ae"/></svg>
<div class="t " style="left:370.7px;top:32.9px;font-size:6.1px;color:#2a5db0;">build.gradle (Chess)</div>
<svg style="left:430.5px;top:34.7px" width="3" height="3" viewBox="0 0 3 3"><path d="M0.2 0.2 L2.8 2.8 M2.8 0.2 L0.2 2.8" stroke="#b0b0b0" stroke-width="0.6"/></svg>
<svg style="left:443.8px;top:32.2px" width="6.5" height="8" viewBox="0 0 6.5 8"><path d="M0.4 0.4 H3.6 L4.8 1.6 V6.4 H0.4Z" fill="#d5dde3" stroke="#8ea0ad" stroke-width="0.6"/><path d="M2.3 3.6 H6.3 L4.3 5.6 L6.3 7.6 H2.3Z" fill="#2d9be8"/><path d="M2.3 3.6 H6.3 L2.3 7.6Z" fill="#e8603c"/><path d="M2.3 7.6 L4.3 5.6 L6.3 7.6Z" fill="#27c7e8"/></svg>
<div class="t " style="left:452.7px;top:32.9px;font-size:6.1px;color:#2b2b2b;">CapturedView.kt</div>
<svg style="left:501.5px;top:34.7px" width="3" height="3" viewBox="0 0 3 3"><path d="M0.2 0.2 L2.8 2.8 M2.8 0.2 L0.2 2.8" stroke="#b0b0b0" stroke-width="0.6"/></svg>
<svg style="left:515px;top:32.2px" width="7" height="8" viewBox="0 0 7 8"><circle cx="3.3" cy="3.8" r="3.1" fill="#40b6e0"/><path d="M2.5 2.3 V5.3 M2.5 3.8 L4.3 2.3 M2.5 3.8 L4.3 5.3" stroke="#fff" stroke-width="0.6" fill="none"/><path d="M3.8 4.6 H7 L5.4 6.2 L7 7.8 H3.8Z" fill="#e8603c"/></svg>
<div class="t " style="left:523.8px;top:32.9px;font-size:6.1px;color:#2b2b2b;">GameViewModel.kt</div>
<svg style="left:581.5px;top:34.7px" width="3" height="3" viewBox="0 0 3 3"><path d="M0.2 0.2 L2.8 2.8 M2.8 0.2 L0.2 2.8" stroke="#b0b0b0" stroke-width="0.6"/></svg>
<div style="position:absolute;left:294px;top:41.6px;width:62.5px;height:1.6px;background:#3e86d2"></div>
<div style="position:absolute;left:178.4px;top:43.6px;width:649.6px;height:14.1px;background:#f2f2f2"></div>
<div style="position:absolute;left:178.4px;top:57.3px;width:649.6px;height:0.6px;background:#d6d6d6"></div>
<svg style="left:737.2px;top:47.5px" width="6" height="5.5" viewBox="0 0 6 5.5"><rect x="0" y="0" width="6" height="5.5" fill="#a6a6a6"/><path d="M1 1.5 H5 M1 2.8 H5 M1 4.1 H5" stroke="#dcdcdc" stroke-width="0.5"/></svg>
<div class="t " style="left:745.9px;top:46.8px;font-size:6.73px;color:#2b2b2b;">Code</div>
<div style="position:absolute;left:764px;top:45.3px;width:26.7px;height:10px;background:#d9d9d9;border-radius:1.5px"></div>
<svg style="left:766.2px;top:47.5px" width="6.5" height="5.5" viewBox="0 0 6.5 5.5"><rect x="0" y="0" width="3" height="5.5" fill="#9a9a9a"/><rect x="3.5" y="0" width="3" height="5.5" fill="#6f6f6f"/></svg>
<div class="t " style="left:775px;top:46.8px;font-size:6.73px;color:#2b2b2b;">Split</div>
<svg style="left:794px;top:47.5px" width="6.5" height="5.5" viewBox="0 0 6.5 5.5"><rect x="0.4" y="0.4" width="5.7" height="4.7" fill="none" stroke="#555" stroke-width="0.8"/><path d="M1 4.5 L2.8 2.3 L4 3.5 L5 2.8 L5.8 4.5Z" fill="#555"/></svg>
<div class="t " style="left:802.5px;top:46.8px;font-size:6.73px;color:#2b2b2b;">Design</div>
<div style="position:absolute;left:178.4px;top:57.9px;width:311.4px;height:451.5px;background:#ffffff"></div>
<div style="position:absolute;left:178.4px;top:57.9px;width:31.6px;height:451.5px;background:#f2f2f2"></div>
<div style="position:absolute;left:178.4px;top:509.4px;width:311.4px;height:7.8px;background:#f2f2f2"></div>
<div style="position:absolute;left:178.4px;top:509.4px;width:31.6px;height:7.6px;background:#f2f2f2"></div>
<div style="position:absolute;left:214px;top:511px;width:168px;height:3.8px;background:#b9b9b9;border-radius:2px"></div>
<div style="position:absolute;left:178.4px;top:125.1625px;width:311.4px;height:11.575px;background:#fcfaed"></div>
<div style="position:absolute;left:212.0px;top:125.5625px;width:155.39999999999998px;height:10px;background:#96c6f6"></div>
<div style="position:absolute;left:270.8px;top:183.8375px;width:42.0px;height:10px;background:#fbe3c0"></div>
<div style="position:absolute;left:359.0px;top:206.9875px;width:42.0px;height:10px;background:#cdf2d6"></div>
<div style="position:absolute;left:308.6px;top:450.06249999999994px;width:42.0px;height:10px;background:#cdf2d6"></div>
<div class="ln" style="top:55.7125px">25</div>
<div class="code" style="top:55.7125px">        <span class="ct">Icon</span>(Icons.Filled.<span class="pri">ArrowForward</span>, <span class="na">contentDescription</span> = <span class="k">null</span></div>
<div class="ln" style="top:67.28750000000001px">26</div>
<div class="code" style="top:67.28750000000001px">    }</div>
<div class="ln" style="top:78.86250000000001px">27</div>
<div class="code" style="top:78.86250000000001px">}</div>
<div class="ln" style="top:90.4375px">28</div>
<div class="code" style="top:90.4375px"></div>
<div class="ln" style="top:102.0125px">29</div>
<div class="code" style="top:102.0125px"><span class="an">@Preview</span></div>
<div class="ln" style="top:113.5875px">30</div>
<div class="code" style="top:113.5875px"><span class="an">@Composable</span></div>
<div class="ln" style="top:125.1625px">31</div>
<div class="code" style="top:125.1625px"><span class="k">fun </span><span class="fd">GameView</span>(viewModel: GameViewModel = <span class="ct">viewModel</span>()) {</div>
<div class="ln" style="top:136.73749999999998px">32</div>
<div class="code" style="top:136.73749999999998px">    <span class="k">var </span><span class="u">selection</span>: Position? <span class="k">by </span><span class="cg">remember</span><span class="b"> { </span><span class="ct">mutableStateOf</span>(</div>
<div class="ln" style="top:148.3125px">33</div>
<div class="code" style="top:148.3125px"></div>
<div class="ln" style="top:159.88750000000002px">34</div>
<div class="code" style="top:159.88750000000002px">    <span class="k">val </span>moveResult <span class="k">by </span>viewModel.<span class="pr">moveResult</span>.<span class="cg">collectAsState</span>(<span class="na">initial</span> = </div>
<div class="ln" style="top:171.4625px">35</div>
<div class="code" style="top:171.4625px"></div>
<div class="ln" style="top:183.0375px">36</div>
<div class="code" style="top:183.0375px">    <span class="k">when </span>(<span class="k">val </span>moveResult = moveResult) {</div>
<div class="ln" style="top:194.61249999999998px">37</div>
<div class="code" style="top:194.61249999999998px">        <span class="k">is </span>MoveResult.Promotion -&gt; {</div>
<div class="ln" style="top:206.1875px">38</div>
<div class="code" style="top:206.1875px">            <span class="k">val </span>onPieceSelection = moveResult.<span class="pr">onPieceSelection</span></div>
<div class="ln" style="top:217.7625px">39</div>
<div class="code" style="top:217.7625px">            <span class="k">val </span>onButtonClicked: (PieceType) -&gt; Unit = <span class="b">{</span></div>
<div class="ln" style="top:229.3375px">40</div>
<div class="code" style="top:229.3375px">                viewModel.updateResult(onPieceSelection(<span class="b">it</span>))</div>
<div class="ln" style="top:240.9125px">41</div>
<div class="code" style="top:240.9125px">            }</div>
<div class="ln" style="top:252.48749999999998px">42</div>
<div class="code" style="top:252.48749999999998px">            <span class="ct">AlertDialog</span>(</div>
<div class="ln" style="top:264.0625px">43</div>
<div class="code" style="top:264.0625px">                <span class="na">onDismissRequest</span> = {},</div>
<div class="ln" style="top:275.63749999999993px">44</div>
<div class="code" style="top:275.63749999999993px">                <span class="na">buttons</span> = {</div>
<div class="ln" style="top:287.2125px">45</div>
<div class="code" style="top:287.2125px">                    <span class="cg">Button</span>({ onButtonClicked(PieceType.Queen) }) {</div>
<div class="ln" style="top:298.78749999999997px">46</div>
<div class="code" style="top:298.78749999999997px">                    <span class="cg">Button</span>({ onButtonClicked(PieceType.Rook) }) {</div>
<div class="ln" style="top:310.36249999999995px">47</div>
<div class="code" style="top:310.36249999999995px">                    <span class="ct">Button</span>({ onButtonClicked(PieceType.Knight) }) {</div>
<div class="ln" style="top:321.93749999999994px">48</div>
<div class="code" style="top:321.93749999999994px">                    <span class="cg">Button</span>({ onButtonClicked(PieceType.Bishop) }) {</div>
<div class="ln" style="top:333.51249999999993px">49</div>
<div class="code" style="top:333.51249999999993px">                },</div>
<div class="ln" style="top:345.0875px">50</div>
<div class="code" style="top:345.0875px">                <span class="na">title</span> = {</div>
<div class="ln" style="top:356.66249999999997px">51</div>
<div class="code" style="top:356.66249999999997px">                    <span class="cg">Text</span>(<span class="na">text</span> = <span class="st">&quot;Promote to&quot;</span>)</div>
<div class="ln" style="top:368.23749999999995px">52</div>
<div class="code" style="top:368.23749999999995px">                },</div>
<div class="ln" style="top:379.81249999999994px">53</div>
<div class="code" style="top:379.81249999999994px">                <span class="na">text</span> = {</div>
<div class="ln" style="top:391.38749999999993px">54</div>
<div class="code" style="top:391.38749999999993px">                    <span class="ct">Text</span>(<span class="na">text</span> = <span class="st">&quot;Please choose a piece type to promote to&quot;</span>)</div>
<div class="ln" style="top:402.9625px">55</div>
<div class="code" style="top:402.9625px">                }</div>
<div class="ln" style="top:414.53749999999997px">56</div>
<div class="code" style="top:414.53749999999997px">            )</div>
<div class="ln" style="top:426.11249999999995px">57</div>
<div class="code" style="top:426.11249999999995px">        }</div>
<div class="ln" style="top:437.68749999999994px">58</div>
<div class="code" style="top:437.68749999999994px">        <span class="k">is </span>MoveResult.Success -&gt; {</div>
<div class="ln" style="top:449.26249999999993px">59</div>
<div class="code" style="top:449.26249999999993px">            <span class="k">val </span>game = moveResult.<span class="pr">game</span></div>
<div class="ln" style="top:460.8375px">60</div>
<div class="code" style="top:460.8375px"></div>
<div class="ln" style="top:472.41249999999997px">61</div>
<div class="code" style="top:472.41249999999997px">            <span class="k">val </span>onSelect: (Position) -&gt; Unit = <span class="b">{</span></div>
<div class="ln" style="top:483.98749999999995px">62</div>
<div class="code" style="top:483.98749999999995px">                <span class="k">val </span>sel = <span class="u">selection</span></div>
<div class="ln" style="top:495.56249999999994px">63</div>
<div class="code" style="top:495.56249999999994px">                <span class="k">if </span>(game.canSelect(<span class="b">it</span>)) {</div>
<div class="ln" style="top:507.13749999999993px">64</div>
<div class="code" style="top:507.13749999999993px">                    <span class="k">val </span>piece = game.board.pieceAt(it)</div>
<div style="position:absolute;left:457.4px;top:138.5375px;width:23px;height:8.2px;background:#f6f6f6;border-radius:2px"></div><div class="t " style="left:459.9px;top:139.33749999999998px;font-size:6.4px;color:#8c8c8c;">value:</div>
<div class="code" style="left:481px;top:136.73749999999998px"><span class="k">nu</span></div>
<div style="position:absolute;left:453.5px;top:219.5625px;width:40px;height:8.2px;background:#f6f6f6;border-radius:2px"></div><div class="t " style="left:456.0px;top:220.36249999999998px;font-size:6.4px;color:#8c8c8c;">it: PieceType</div>
<div style="position:absolute;left:419px;top:474.2125px;width:38px;height:8.2px;background:#f6f6f6;border-radius:2px"></div><div class="t " style="left:421.5px;top:475.0125px;font-size:6.4px;color:#8c8c8c;">it: Position</div>
<svg style="left:193px;top:104.5125px" width="7" height="7" viewBox="0 0 7 7"><circle cx="3.5" cy="3.5" r="1.5" fill="none" stroke="#6e7d88" stroke-width="1.2"/><circle cx="3.5" cy="3.5" r="2.8" fill="none" stroke="#6e7d88" stroke-width="1.1" stroke-dasharray="1.1 0.9"/></svg>
<div style="position:absolute;left:204.3px;top:102.8125px;width:4.5px;height:10px;background:repeating-linear-gradient(45deg,#a9d8b0 0 1px,#d8eedb 1px 2px)"></div>
<svg style="left:192.5px;top:127.1625px" width="8" height="8" viewBox="0 0 8 8"><rect x="0.5" y="0.5" width="4.5" height="6.5" rx="0.8" fill="none" stroke="#555" stroke-width="0.8"/><path d="M4 3.5 L8 6 L4 8.5Z" fill="#2aa04a"/></svg>
<svg style="left:207px;top:70.28750000000001px" width="4" height="5" viewBox="0 0 4 5"><path d="M0.5 0.5 H3.5 V3 L2 4.5 L0.5 3Z" fill="#fff" stroke="#c9c9c9" stroke-width="0.5"/></svg>
<svg style="left:207px;top:81.86250000000001px" width="4" height="5" viewBox="0 0 4 5"><path d="M0.5 0.5 H3.5 V3 L2 4.5 L0.5 3Z" fill="#fff" stroke="#c9c9c9" stroke-width="0.5"/></svg>
<svg style="left:207px;top:128.1625px" width="4" height="5" viewBox="0 0 4 5"><path d="M0.5 0.5 H3.5 V3 L2 4.5 L0.5 3Z" fill="#fff" stroke="#c9c9c9" stroke-width="0.5"/></svg>
<svg style="left:207px;top:186.0375px" width="4" height="5" viewBox="0 0 4 5"><path d="M0.5 0.5 H3.5 V3 L2 4.5 L0.5 3Z" fill="#fff" stroke="#c9c9c9" stroke-width="0.5"/></svg>
<svg style="left:207px;top:197.61249999999998px" width="4" height="5" viewBox="0 0 4 5"><path d="M0.5 0.5 H3.5 V3 L2 4.5 L0.5 3Z" fill="#fff" stroke="#c9c9c9" stroke-width="0.5"/></svg>
<svg style="left:216.5px;top:114.0875px" width="6" height="7" viewBox="0 0 6 7"><circle cx="3" cy="2.8" r="2.6" fill="#f0a020"/><rect x="1.8" y="5" width="2.4" height="1.5" fill="#c98010"/></svg>
<div style="position:absolute;left:447.6px;top:58.2px;width:42px;height:12px;background:#ffffff"></div>
<svg style="left:452.8px;top:62px" width="6" height="5.5" viewBox="0 0 6 5.5"><path d="M3 0 L6 5.5 H0Z" fill="#f2b62a"/><path d="M3 1.8 V3.8" stroke="#fff" stroke-width="0.7"/></svg>
<div class="t " style="left:461.5px;top:61.2px;font-size:6px;color:#777;">1</div>
<svg style="left:469.5px;top:63px" width="4" height="2.5" viewBox="0 0 4 2.5"><path d="M0.3 2.2 L2 0.5 L3.7 2.2" fill="none" stroke="#777" stroke-width="0.6"/></svg>
<svg style="left:480.5px;top:63.5px" width="4" height="2.5" viewBox="0 0 4 2.5"><path d="M0.3 0.3 L2 2 L3.7 0.3" fill="none" stroke="#777" stroke-width="0.6"/></svg>
<div style="position:absolute;left:487.2px;top:61px;width:1.2px;height:1px;background:#5bc06a"></div>
<div style="position:absolute;left:480px;top:95px;width:8px;height:0.8px;background:#d27fd0"></div>
<div style="position:absolute;left:479.3px;top:81.3px;width:0.8px;height:1.6px;background:#3cbf5a"></div>
<div style="position:absolute;left:479.3px;top:154px;width:0.8px;height:1.6px;background:#3cbf5a"></div>
<div style="position:absolute;left:483px;top:137.3px;width:4.3px;height:186px;background:#a9a9a9;border-radius:2px"></div>
<div style="position:absolute;left:483px;top:163.5px;width:7px;height:0.8px;background:#d27fd0"></div>
<div style="position:absolute;left:482.5px;top:188px;width:5.5px;height:1.2px;background:#e8a030"></div>
<div style="position:absolute;left:490px;top:57.9px;width:338px;height:14.6px;background:#f2f2f2"></div>
<div style="position:absolute;left:490px;top:72.2px;width:338px;height:0.7px;background:#d6d6d6"></div>
<div style="position:absolute;left:494px;top:62.9px;width:5.9px;height:5.3px;background:#e8344a"></div>
<div class="t " style="left:502.5px;top:62.1px;font-size:7.17px;color:#2b2b2b;">Stop Interactive Mode</div>
<svg style="left:577.5px;top:61.5px" width="7.5" height="7.5" viewBox="0 0 7.5 7.5"><path d="M6.3 2.2 A3 3 0 0 0 1.2 2.5 M1.2 5.3 A3 3 0 0 0 6.3 5" fill="none" stroke="#2aa04a" stroke-width="1.1"/><path d="M6.8 0.5 V3 H4.3Z M0.7 7 V4.5 H3.2Z" fill="#2aa04a"/></svg>
<svg style="left:815.5px;top:62.8px" width="6.5" height="5" viewBox="0 0 6.5 5"><path d="M0.5 2.5 L2.4 4.3 L6 0.6" fill="none" stroke="#2aa04a" stroke-width="1.1"/></svg>
<div style="position:absolute;left:490px;top:72.9px;width:329px;height:436.1px;background:#c1cdd5"></div>
<div style="position:absolute;left:819px;top:72.7px;width:9px;height:436.3px;background:#f4f4f4"></div>
<div style="position:absolute;left:821px;top:75px;width:4.2px;height:399px;background:#c6c6c6;border-radius:2px"></div>
<div style="position:absolute;left:827.6px;top:29px;width:0.6px;height:488px;background:#d4d4d4"></div>
<div style="position:absolute;left:559.9px;top:108px;width:0.6px;height:401px;background:#b3bfc7"></div>
<div style="position:absolute;left:748.3px;top:108px;width:0.6px;height:401px;background:#b3bfc7"></div>
<div class="t " style="left:561px;top:100.9px;font-size:6.57px;color:#6f7a82;">GameView</div>
<div style="position:absolute;left:560.5px;top:296.3px;width:187.8px;height:31.2px;background:#ffffff"></div>
<div class="t " style="left:632.4px;top:336.2px;font-size:7.94px;color:#222;">White&#x27;s Turn</div>
<div style="position:absolute;left:804.4px;top:432.2px;width:13.3px;height:14.2px;background:#fbfbfb;border-radius:1.5px"></div>
<svg style="left:807.5px;top:435.5px" width="7" height="7.5" viewBox="0 0 7 7.5"><path d="M1 4 V2.5 A0.6 0.6 0 0 1 2.2 2.5 V1.2 A0.6 0.6 0 0 1 3.4 1.2 V1 A0.6 0.6 0 0 1 4.6 1 V1.5 A0.6 0.6 0 0 1 5.8 1.5 V5 A2.5 2.5 0 0 1 3.3 7.5 H3 A2.5 2.5 0 0 1 0.6 5Z" fill="#555"/></svg>
<div style="position:absolute;left:804.4px;top:450.8px;width:13.3px;height:55.5px;background:#fbfbfb;border-radius:1.5px"></div>
<svg style="left:808px;top:454px" width="6" height="6" viewBox="0 0 6 6"><path d="M3 0.5 V5.5 M0.5 3 H5.5" stroke="#444" stroke-width="0.9"/></svg>
<div style="position:absolute;left:808.5px;top:470.7px;width:5px;height:0.9px;background:#444"></div>
<div class="t " style="left:807.8px;top:482.5px;font-size:4.6px;color:#444;font-weight:bold">1:1</div>
<svg style="left:807.5px;top:494.5px" width="7" height="7" viewBox="0 0 7 7"><rect x="0.5" y="0.5" width="6" height="6" fill="none" stroke="#555" stroke-width="0.8"/><path d="M1.5 5.5 L5.5 1.5 M1.5 3.5 V5.5 H3.5 M3.5 1.5 H5.5 V3.5" fill="none" stroke="#555" stroke-width="0.7"/></svg>
<svg style="left:560.6px;top:108.6px" width="187.76" height="187.76" viewBox="0 0 187.76 187.76"><rect x="0.00" y="0.00" width="23.52" height="23.52" fill="#fad5aa"/><rect x="23.47" y="0.00" width="23.52" height="23.52" fill="#956240"/><rect x="46.94" y="0.00" width="23.52" height="23.52" fill="#fad5aa"/><rect x="70.41" y="0.00" width="23.52" height="23.52" fill="#956240"/><rect x="93.88" y="0.00" width="23.52" height="23.52" fill="#fad5aa"/><rect x="117.35" y="0.00" width="23.52" height="23.52" fill="#956240"/><rect x="140.82" y="0.00" width="23.52" height="23.52" fill="#fad5aa"/><rect x="164.29" y="0.00" width="23.52" height="23.52" fill="#956240"/><rect x="0.00" y="23.47" width="23.52" height="23.52" fill="#956240"/><rect x="23.47" y="23.47" width="23.52" height="23.52" fill="#fad5aa"/><rect x="46.94" y="23.47" width="23.52" height="23.52" fill="#956240"/><rect x="70.41" y="23.47" width="23.52" height="23.52" fill="#fad5aa"/><rect x="93.88" y="23.47" width="23.52" height="23.52" fill="#956240"/><rect x="117.35" y="23.47" width="23.52" height="23.52" fill="#fad5aa"/><rect x="140.82" y="23.47" width="23.52" height="23.52" fill="#956240"/><rect x="164.29" y="23.47" width="23.52" height="23.52" fill="#fad5aa"/><rect x="0.00" y="46.94" width="23.52" height="23.52" fill="#fad5aa"/><rect x="23.47" y="46.94" width="23.52" height="23.52" fill="#956240"/><rect x="46.94" y="46.94" width="23.52" height="23.52" fill="#fad5aa"/><rect x="70.41" y="46.94" width="23.52" height="23.52" fill="#956240"/><rect x="93.88" y="46.94" width="23.52" height="23.52" fill="#fad5aa"/><rect x="117.35" y="46.94" width="23.52" height="23.52" fill="#956240"/><rect x="140.82" y="46.94" width="23.52" height="23.52" fill="#fad5aa"/><rect x="164.29" y="46.94" width="23.52" height="23.52" fill="#956240"/><rect x="0.00" y="70.41" width="23.52" height="23.52" fill="#956240"/><rect x="23.47" y="70.41" width="23.52" height="23.52" fill="#fad5aa"/><rect x="46.94" y="70.41" width="23.52" height="23.52" fill="#956240"/><rect x="70.41" y="70.41" width="23.52" height="23.52" fill="#fad5aa"/><rect x="93.88" y="70.41" width="23.52" height="23.52" fill="#956240"/><rect x="117.35" y="70.41" width="23.52" height="23.52" fill="#fad5aa"/><rect x="140.82" y="70.41" width="23.52" height="23.52" fill="#956240"/><rect x="164.29" y="70.41" width="23.52" height="23.52" fill="#fad5aa"/><rect x="0.00" y="93.88" width="23.52" height="23.52" fill="#fad5aa"/><rect x="23.47" y="93.88" width="23.52" height="23.52" fill="#956240"/><rect x="46.94" y="93.88" width="23.52" height="23.52" fill="#fad5aa"/><rect x="70.41" y="93.88" width="23.52" height="23.52" fill="#956240"/><rect x="93.88" y="93.88" width="23.52" height="23.52" fill="#fad5aa"/><rect x="117.35" y="93.88" width="23.52" height="23.52" fill="#956240"/><rect x="140.82" y="93.88" width="23.52" height="23.52" fill="#fad5aa"/><rect x="164.29" y="93.88" width="23.52" height="23.52" fill="#956240"/><rect x="0.00" y="117.35" width="23.52" height="23.52" fill="#956240"/><rect x="23.47" y="117.35" width="23.52" height="23.52" fill="#fad5aa"/><rect x="46.94" y="117.35" width="23.52" height="23.52" fill="#956240"/><rect x="70.41" y="117.35" width="23.52" height="23.52" fill="#fad5aa"/><rect x="93.88" y="117.35" width="23.52" height="23.52" fill="#956240"/><rect x="117.35" y="117.35" width="23.52" height="23.52" fill="#fad5aa"/><rect x="140.82" y="117.35" width="23.52" height="23.52" fill="#956240"/><rect x="164.29" y="117.35" width="23.52" height="23.52" fill="#fad5aa"/><rect x="0.00" y="140.82" width="23.52" height="23.52" fill="#fad5aa"/><rect x="23.47" y="140.82" width="23.52" height="23.52" fill="#956240"/><rect x="46.94" y="140.82" width="23.52" height="23.52" fill="#fad5aa"/><rect x="70.41" y="140.82" width="23.52" height="23.52" fill="#956240"/><rect x="93.88" y="140.82" width="23.52" height="23.52" fill="#fad5aa"/><rect x="117.35" y="140.82" width="23.52" height="23.52" fill="#956240"/><rect x="140.82" y="140.82" width="23.52" height="23.52" fill="#fad5aa"/><rect x="164.29" y="140.82" width="23.52" height="23.52" fill="#956240"/><rect x="0.00" y="164.29" width="23.52" height="23.52" fill="#956240"/><rect x="23.47" y="164.29" width="23.52" height="23.52" fill="#fad5aa"/><rect x="46.94" y="164.29" width="23.52" height="23.52" fill="#956240"/><rect x="70.41" y="164.29" width="23.52" height="23.52" fill="#fad5aa"/><rect x="93.88" y="164.29" width="23.52" height="23.52" fill="#956240"/><rect x="117.35" y="164.29" width="23.52" height="23.52" fill="#fad5aa"/><rect x="140.82" y="164.29" width="23.52" height="23.52" fill="#956240"/><rect x="164.29" y="164.29" width="23.52" height="23.52" fill="#fad5aa"/><rect x="117.35" y="140.82" width="23.47" height="23.47" fill="#3f7cc0"/><circle cx="129.08" cy="105.61" r="11.4" fill="#2e4a6a"/><circle cx="129.08" cy="129.08" r="11.4" fill="#6a8cab"/><g transform="translate(-1.54,-3.17) scale(0.59,0.65)"><g opacity="0.85"><g fill="#fff" stroke="#fff" stroke-width="4.5" stroke-linejoin="round"><path d="M9,39 H36 V36 H9Z"/><path d="M12.5,32 L14,29.5 H31 L32.5,32Z"/><path d="M12,36 V32 H33 V36Z"/><path d="M14,29.5 V16.5 H31 V29.5Z"/><path d="M14,16.5 L11,14 H34 L31,16.5Z"/><path d="M11,14 V9 H15 V11 H20 V9 H25 V11 H30 V9 H34 V14Z"/><path d="M12,35.5 H33 M13,31.5 H32 M14,29.5 H31 M14,16.5 H31 M11,14 H34" fill="none" stroke="#fff" stroke-width="4.5"/></g></g></g><g transform="translate(-1.54,-3.17) scale(0.59,0.65)"><g fill="#000" stroke="#000" stroke-width="1.5" stroke-linejoin="round"><path d="M9,39 H36 V36 H9Z"/><path d="M12.5,32 L14,29.5 H31 L32.5,32Z"/><path d="M12,36 V32 H33 V36Z"/><path d="M14,29.5 V16.5 H31 V29.5Z"/><path d="M14,16.5 L11,14 H34 L31,16.5Z"/><path d="M11,14 V9 H15 V11 H20 V9 H25 V11 H30 V9 H34 V14Z"/><path d="M12,35.5 H33 M13,31.5 H32 M14,29.5 H31 M14,16.5 H31 M11,14 H34" fill="none" stroke="#fff" stroke-width="1"/></g></g><g transform="translate(23.28,-0.91) scale(0.53,0.58)"><g opacity="0.85"><g stroke="#fff" stroke-width="4.5" stroke-linejoin="round" stroke-linecap="round"><path d="M 22,10 C 32.5,11 38.5,18 38,39 L 15,39 C 15,30 25,32.5 23,18" fill="#fff"/><path d="M 24,18 C 24.38,20.91 18.45,25.37 16,27 C 13,29 13.18,31.34 11,31 C 9.958,30.06 12.41,27.96 11,28 C 10,28 11.19,29.23 10,30 C 9,30 5.997,31 6,26 C 6,24 12,14 12,14 C 12,14 13.89,12.1 14,10.5 C 13.27,9.506 13.5,8.5 13.5,7.5 C 14.5,6.5 16.5,10 16.5,10 L 18.5,10 C 18.5,10 19.28,8.008 21,7 C 22,7 22,10 22,10" fill="#fff"/><circle cx="9" cy="25.5" r="0.6" fill="#fff" stroke="#fff"/><ellipse cx="14.5" cy="15.5" rx="0.6" ry="1.5" transform="rotate(30 14.5 15.5)" fill="#fff" stroke="#fff"/><path d="M 24.55,10.4 L 24.1,11.85 L 24.6,12 C 27.75,13 30.25,14.49 32.5,18.75 C 34.75,23.01 35.75,29.06 35.25,39 L 35.2,39.5 L 37.45,39.5 L 37.5,39 C 38,28.94 36.62,22.15 34.25,17.66 C 31.88,13.17 28.46,11.02 25.06,10.5 L 24.55,10.4 z" fill="#fff" stroke="#fff"/></g></g></g><g transform="translate(23.28,-0.91) scale(0.53,0.58)"><g stroke="#000" stroke-width="1.5" stroke-linejoin="round" stroke-linecap="round"><path d="M 22,10 C 32.5,11 38.5,18 38,39 L 15,39 C 15,30 25,32.5 23,18" fill="#000"/><path d="M 24,18 C 24.38,20.91 18.45,25.37 16,27 C 13,29 13.18,31.34 11,31 C 9.958,30.06 12.41,27.96 11,28 C 10,28 11.19,29.23 10,30 C 9,30 5.997,31 6,26 C 6,24 12,14 12,14 C 12,14 13.89,12.1 14,10.5 C 13.27,9.506 13.5,8.5 13.5,7.5 C 14.5,6.5 16.5,10 16.5,10 L 18.5,10 C 18.5,10 19.28,8.008 21,7 C 22,7 22,10 22,10" fill="#000"/><circle cx="9" cy="25.5" r="0.6" fill="#fff" stroke="#fff"/><ellipse cx="14.5" cy="15.5" rx="0.6" ry="1.5" transform="rotate(30 14.5 15.5)" fill="#fff" stroke="#fff"/><path d="M 24.55,10.4 L 24.1,11.85 L 24.6,12 C 27.75,13 30.25,14.49 32.5,18.75 C 34.75,23.01 35.75,29.06 35.25,39 L 35.2,39.5 L 37.45,39.5 L 37.5,39 C 38,28.94 36.62,22.15 34.25,17.66 C 31.88,13.17 28.46,11.02 25.06,10.5 L 24.55,10.4 z" fill="#fff" stroke="none"/></g></g><g transform="translate(45.40,-0.47) scale(0.59,0.58)"><g opacity="0.85"><g stroke="#fff" stroke-width="4.5" stroke-linejoin="round" stroke-linecap="round"><g fill="#fff"><path d="M 9,36 C 12.39,35.03 19.11,36.43 22.5,34 C 25.89,36.43 32.61,35.03 36,36 C 36,36 37.65,36.54 39,38 C 38.32,38.97 37.35,38.99 36,38.5 C 32.61,37.53 25.89,38.96 22.5,37.5 C 19.11,38.96 12.39,37.53 9,38.5 C 7.65,38.99 6.68,38.97 6,38 C 7.35,36.54 9,36 9,36 z"/><path d="M 15,32 C 17.5,34.5 27.5,34.5 30,32 C 30.5,30.5 30,30 30,30 C 30,27.5 27.5,26 27.5,26 C 33,24.5 33.5,14.5 22.5,10.5 C 11.5,14.5 12,24.5 17.5,26 C 17.5,26 15,27.5 15,30 C 15,30 14.5,30.5 15,32 z"/><circle cx="22.5" cy="8" r="2.5"/></g><path d="M 17.5,26 L 27.5,26 M 15,30 L 30,30 M 22.5,15.5 L 22.5,20.5 M 20,18 L 25,18" fill="none" stroke="#fff"/></g></g></g><g transform="translate(45.40,-0.47) scale(0.59,0.58)"><g stroke="#000" stroke-width="1.5" stroke-linejoin="round" stroke-linecap="round"><g fill="#000"><path d="M 9,36 C 12.39,35.03 19.11,36.43 22.5,34 C 25.89,36.43 32.61,35.03 36,36 C 36,36 37.65,36.54 39,38 C 38.32,38.97 37.35,38.99 36,38.5 C 32.61,37.53 25.89,38.96 22.5,37.5 C 19.11,38.96 12.39,37.53 9,38.5 C 7.65,38.99 6.68,38.97 6,38 C 7.35,36.54 9,36 9,36 z"/><path d="M 15,32 C 17.5,34.5 27.5,34.5 30,32 C 30.5,30.5 30,30 30,30 C 30,27.5 27.5,26 27.5,26 C 33,24.5 33.5,14.5 22.5,10.5 C 11.5,14.5 12,24.5 17.5,26 C 17.5,26 15,27.5 15,30 C 15,30 14.5,30.5 15,32 z"/><circle cx="22.5" cy="8" r="2.5"/></g><path d="M 17.5,26 L 27.5,26 M 15,30 L 30,30 M 22.5,15.5 L 22.5,20.5 M 20,18 L 25,18" fill="none" stroke="#fff"/></g></g><g transform="translate(70.22,0.60) scale(0.53,0.52)"><g opacity="0.85"><g fill="#fff" stroke="#fff" stroke-width="4.5" stroke-linejoin="round"><path d="M 9,26 C 17.5,24.5 30,24.5 36,26 L 38.5,13.5 L 31,25 L 30.7,10.9 L 25.5,24.5 L 22.5,10 L 19.5,24.5 L 14.3,10.9 L 14,25 L 6.5,13.5 L 9,26 z"/><path d="m 9,26 c 0,2 1.5,2 2.5,4 1,1.5 1,1 0.5,3.5 -1.5,1 -1,2.5 -1,2.5 -1.5,1.5 0,2.5 0,2.5 6.5,1 16.5,1 23,0 0,0 1.5,-1 0,-2.5 0,0 0.5,-1.5 -1,-2.5 -0.5,-2.5 -0.5,-2 0.5,-3.5 1,-2 2.5,-2 2.5,-4 -8.5,-1.5 -18.5,-1.5 -27,0 z"/><circle cx="6" cy="12" r="2"/><circle cx="14" cy="9" r="2"/><circle cx="22.5" cy="8" r="2"/><circle cx="31" cy="9" r="2"/><circle cx="39" cy="12" r="2"/><g fill="none" stroke="#fff"><path d="M 11,29 A 35,35 1 0 1 34,29"/><path d="M 12.5,31.5 L 32.5,31.5"/><path d="M 11.5,34.5 A 35,35 1 0 0 33.5,34.5"/><path d="M 10.5,37.5 A 35,35 1 0 0 34.5,37.5"/></g></g></g></g><g transform="translate(70.22,0.60) scale(0.53,0.52)"><g fill="#000" stroke="#000" stroke-width="1.5" stroke-linejoin="round"><path d="M 9,26 C 17.5,24.5 30,24.5 36,26 L 38.5,13.5 L 31,25 L 30.7,10.9 L 25.5,24.5 L 22.5,10 L 19.5,24.5 L 14.3,10.9 L 14,25 L 6.5,13.5 L 9,26 z"/><path d="m 9,26 c 0,2 1.5,2 2.5,4 1,1.5 1,1 0.5,3.5 -1.5,1 -1,2.5 -1,2.5 -1.5,1.5 0,2.5 0,2.5 6.5,1 16.5,1 23,0 0,0 1.5,-1 0,-2.5 0,0 0.5,-1.5 -1,-2.5 -0.5,-2.5 -0.5,-2 0.5,-3.5 1,-2 2.5,-2 2.5,-4 -8.5,-1.5 -18.5,-1.5 -27,0 z"/><circle cx="6" cy="12" r="2"/><circle cx="14" cy="9" r="2"/><circle cx="22.5" cy="8" r="2"/><circle cx="31" cy="9" r="2"/><circle cx="39" cy="12" r="2"/><g fill="none" stroke="#fff"><path d="M 11,29 A 35,35 1 0 1 34,29"/><path d="M 12.5,31.5 L 32.5,31.5"/><path d="M 11.5,34.5 A 35,35 1 0 0 33.5,34.5"/><path d="M 10.5,37.5 A 35,35 1 0 0 34.5,37.5"/></g></g></g><g transform="translate(93.69,-0.68) scale(0.53,0.57)"><g opacity="0.85"><g stroke="#fff" stroke-width="4.5" stroke-linejoin="round" stroke-linecap="round"><path d="M 22.5,11.63 L 22.5,6 M 20,8 L 25,8" fill="none"/><path d="M 22.5,25 C 22.5,25 27,17.5 25.5,14.5 C 25.5,14.5 24.5,12 22.5,12 C 20.5,12 19.5,14.5 19.5,14.5 C 18,17.5 22.5,25 22.5,25" fill="#fff"/><path d="M 12.5,37 C 18,40.5 27,40.5 32.5,37 L 32.5,30 C 32.5,30 41.5,25.5 38.5,19.5 C 34.5,13 25,16 22.5,23.5 L 22.5,27 L 22.5,23.5 C 20,16 10.5,13 6.5,19.5 C 3.5,25.5 12.5,30 12.5,30 L 12.5,37" fill="#fff"/><path d="M 32,29.5 C 32,29.5 40.5,25.5 38.03,19.85 C 34.15,14 25,18 22.5,24.5 L 22.5,26.6 L 22.5,24.5 C 20,18 10.85,14 6.97,19.85 C 4.5,25.5 13,29.5 13,29.5" fill="none" stroke="#fff"/><path d="M 12.5,30 C 18,27 27,27 32.5,30 M 12.5,33.5 C 18,30.5 27,30.5 32.5,33.5 M 12.5,37 C 18,34 27,34 32.5,37" fill="none" stroke="#fff"/></g></g></g><g transform="translate(93.69,-0.68) scale(0.53,0.57)"><g stroke="#000" stroke-width="1.5" stroke-linejoin="round" stroke-linecap="round"><path d="M 22.5,11.63 L 22.5,6 M 20,8 L 25,8" fill="none"/><path d="M 22.5,25 C 22.5,25 27,17.5 25.5,14.5 C 25.5,14.5 24.5,12 22.5,12 C 20.5,12 19.5,14.5 19.5,14.5 C 18,17.5 22.5,25 22.5,25" fill="#000"/><path d="M 12.5,37 C 18,40.5 27,40.5 32.5,37 L 32.5,30 C 32.5,30 41.5,25.5 38.5,19.5 C 34.5,13 25,16 22.5,23.5 L 22.5,27 L 22.5,23.5 C 20,16 10.5,13 6.5,19.5 C 3.5,25.5 12.5,30 12.5,30 L 12.5,37" fill="#000"/><path d="M 32,29.5 C 32,29.5 40.5,25.5 38.03,19.85 C 34.15,14 25,18 22.5,24.5 L 22.5,26.6 L 22.5,24.5 C 20,18 10.85,14 6.97,19.85 C 4.5,25.5 13,29.5 13,29.5" fill="none" stroke="#fff"/><path d="M 12.5,30 C 18,27 27,27 32.5,30 M 12.5,33.5 C 18,30.5 27,30.5 32.5,33.5 M 12.5,37 C 18,34 27,34 32.5,37" fill="none" stroke="#fff"/></g></g><g transform="translate(115.81,-0.47) scale(0.59,0.58)"><g opacity="0.85"><g stroke="#fff" stroke-width="4.5" stroke-linejoin="round" stroke-linecap="round"><g fill="#fff"><path d="M 9,36 C 12.39,35.03 19.11,36.43 22.5,34 C 25.89,36.43 32.61,35.03 36,36 C 36,36 37.65,36.54 39,38 C 38.32,38.97 37.35,38.99 36,38.5 C 32.61,37.53 25.89,38.96 22.5,37.5 C 19.11,38.96 12.39,37.53 9,38.5 C 7.65,38.99 6.68,38.97 6,38 C 7.35,36.54 9,36 9,36 z"/><path d="M 15,32 C 17.5,34.5 27.5,34.5 30,32 C 30.5,30.5 30,30 30,30 C 30,27.5 27.5,26 27.5,26 C 33,24.5 33.5,14.5 22.5,10.5 C 11.5,14.5 12,24.5 17.5,26 C 17.5,26 15,27.5 15,30 C 15,30 14.5,30.5 15,32 z"/><circle cx="22.5" cy="8" r="2.5"/></g><path d="M 17.5,26 L 27.5,26 M 15,30 L 30,30 M 22.5,15.5 L 22.5,20.5 M 20,18 L 25,18" fill="none" stroke="#fff"/></g></g></g><g transform="translate(115.81,-0.47) scale(0.59,0.58)"><g stroke="#000" stroke-width="1.5" stroke-linejoin="round" stroke-linecap="round"><g fill="#000"><path d="M 9,36 C 12.39,35.03 19.11,36.43 22.5,34 C 25.89,36.43 32.61,35.03 36,36 C 36,36 37.65,36.54 39,38 C 38.32,38.97 37.35,38.99 36,38.5 C 32.61,37.53 25.89,38.96 22.5,37.5 C 19.11,38.96 12.39,37.53 9,38.5 C 7.65,38.99 6.68,38.97 6,38 C 7.35,36.54 9,36 9,36 z"/><path d="M 15,32 C 17.5,34.5 27.5,34.5 30,32 C 30.5,30.5 30,30 30,30 C 30,27.5 27.5,26 27.5,26 C 33,24.5 33.5,14.5 22.5,10.5 C 11.5,14.5 12,24.5 17.5,26 C 17.5,26 15,27.5 15,30 C 15,30 14.5,30.5 15,32 z"/><circle cx="22.5" cy="8" r="2.5"/></g><path d="M 17.5,26 L 27.5,26 M 15,30 L 30,30 M 22.5,15.5 L 22.5,20.5 M 20,18 L 25,18" fill="none" stroke="#fff"/></g></g><g transform="translate(140.63,-0.91) scale(0.53,0.58)"><g opacity="0.85"><g stroke="#fff" stroke-width="4.5" stroke-linejoin="round" stroke-linecap="round"><path d="M 22,10 C 32.5,11 38.5,18 38,39 L 15,39 C 15,30 25,32.5 23,18" fill="#fff"/><path d="M 24,18 C 24.38,20.91 18.45,25.37 16,27 C 13,29 13.18,31.34 11,31 C 9.958,30.06 12.41,27.96 11,28 C 10,28 11.19,29.23 10,30 C 9,30 5.997,31 6,26 C 6,24 12,14 12,14 C 12,14 13.89,12.1 14,10.5 C 13.27,9.506 13.5,8.5 13.5,7.5 C 14.5,6.5 16.5,10 16.5,10 L 18.5,10 C 18.5,10 19.28,8.008 21,7 C 22,7 22,10 22,10" fill="#fff"/><circle cx="9" cy="25.5" r="0.6" fill="#fff" stroke="#fff"/><ellipse cx="14.5" cy="15.5" rx="0.6" ry="1.5" transform="rotate(30 14.5 15.5)" fill="#fff" stroke="#fff"/><path d="M 24.55,10.4 L 24.1,11.85 L 24.6,12 C 27.75,13 30.25,14.49 32.5,18.75 C 34.75,23.01 35.75,29.06 35.25,39 L 35.2,39.5 L 37.45,39.5 L 37.5,39 C 38,28.94 36.62,22.15 34.25,17.66 C 31.88,13.17 28.46,11.02 25.06,10.5 L 24.55,10.4 z" fill="#fff" stroke="#fff"/></g></g></g><g transform="translate(140.63,-0.91) scale(0.53,0.58)"><g stroke="#000" stroke-width="1.5" stroke-linejoin="round" stroke-linecap="round"><path d="M 22,10 C 32.5,11 38.5,18 38,39 L 15,39 C 15,30 25,32.5 23,18" fill="#000"/><path d="M 24,18 C 24.38,20.91 18.45,25.37 16,27 C 13,29 13.18,31.34 11,31 C 9.958,30.06 12.41,27.96 11,28 C 10,28 11.19,29.23 10,30 C 9,30 5.997,31 6,26 C 6,24 12,14 12,14 C 12,14 13.89,12.1 14,10.5 C 13.27,9.506 13.5,8.5 13.5,7.5 C 14.5,6.5 16.5,10 16.5,10 L 18.5,10 C 18.5,10 19.28,8.008 21,7 C 22,7 22,10 22,10" fill="#000"/><circle cx="9" cy="25.5" r="0.6" fill="#fff" stroke="#fff"/><ellipse cx="14.5" cy="15.5" rx="0.6" ry="1.5" transform="rotate(30 14.5 15.5)" fill="#fff" stroke="#fff"/><path d="M 24.55,10.4 L 24.1,11.85 L 24.6,12 C 27.75,13 30.25,14.49 32.5,18.75 C 34.75,23.01 35.75,29.06 35.25,39 L 35.2,39.5 L 37.45,39.5 L 37.5,39 C 38,28.94 36.62,22.15 34.25,17.66 C 31.88,13.17 28.46,11.02 25.06,10.5 L 24.55,10.4 z" fill="#fff" stroke="none"/></g></g><g transform="translate(162.75,-3.17) scale(0.59,0.65)"><g opacity="0.85"><g fill="#fff" stroke="#fff" stroke-width="4.5" stroke-linejoin="round"><path d="M9,39 H36 V36 H9Z"/><path d="M12.5,32 L14,29.5 H31 L32.5,32Z"/><path d="M12,36 V32 H33 V36Z"/><path d="M14,29.5 V16.5 H31 V29.5Z"/><path d="M14,16.5 L11,14 H34 L31,16.5Z"/><path d="M11,14 V9 H15 V11 H20 V9 H25 V11 H30 V9 H34 V14Z"/><path d="M12,35.5 H33 M13,31.5 H32 M14,29.5 H31 M14,16.5 H31 M11,14 H34" fill="none" stroke="#fff" stroke-width="4.5"/></g></g></g><g transform="translate(162.75,-3.17) scale(0.59,0.65)"><g fill="#000" stroke="#000" stroke-width="1.5" stroke-linejoin="round"><path d="M9,39 H36 V36 H9Z"/><path d="M12.5,32 L14,29.5 H31 L32.5,32Z"/><path d="M12,36 V32 H33 V36Z"/><path d="M14,29.5 V16.5 H31 V29.5Z"/><path d="M14,16.5 L11,14 H34 L31,16.5Z"/><path d="M11,14 V9 H15 V11 H20 V9 H25 V11 H30 V9 H34 V14Z"/><path d="M12,35.5 H33 M13,31.5 H32 M14,29.5 H31 M14,16.5 H31 M11,14 H34" fill="none" stroke="#fff" stroke-width="1"/></g></g><g transform="translate(-1.77,21.11) scale(0.6,0.61)"><g opacity="0.85"><path d="m 22.5,9 c -2.21,0 -4,1.79 -4,4 0,0.89 0.29,1.71 0.78,2.38 C 17.33,16.5 16,18.59 16,21 c 0,2.03 0.94,3.84 2.41,5.03 C 15.41,27.09 11,31.58 11,39.5 H 34 C 34,31.58 29.59,27.09 26.59,26.03 28.06,24.84 29,23.03 29,21 29,18.59 27.67,16.5 25.72,15.38 26.21,14.71 26.5,13.89 26.5,13 c 0,-2.21 -1.79,-4 -4,-4 z" fill="#fff" stroke="#fff" stroke-width="4.5"/></g></g><g transform="translate(-1.77,21.11) scale(0.6,0.61)"><path d="m 22.5,9 c -2.21,0 -4,1.79 -4,4 0,0.89 0.29,1.71 0.78,2.38 C 17.33,16.5 16,18.59 16,21 c 0,2.03 0.94,3.84 2.41,5.03 C 15.41,27.09 11,31.58 11,39.5 H 34 C 34,31.58 29.59,27.09 26.59,26.03 28.06,24.84 29,23.03 29,21 29,18.59 27.67,16.5 25.72,15.38 26.21,14.71 26.5,13.89 26.5,13 c 0,-2.21 -1.79,-4 -4,-4 z" fill="#000" stroke="#000" stroke-width="1.5"/></g><g transform="translate(21.70,21.11) scale(0.6,0.61)"><g opacity="0.85"><path d="m 22.5,9 c -2.21,0 -4,1.79 -4,4 0,0.89 0.29,1.71 0.78,2.38 C 17.33,16.5 16,18.59 16,21 c 0,2.03 0.94,3.84 2.41,5.03 C 15.41,27.09 11,31.58 11,39.5 H 34 C 34,31.58 29.59,27.09 26.59,26.03 28.06,24.84 29,23.03 29,21 29,18.59 27.67,16.5 25.72,15.38 26.21,14.71 26.5,13.89 26.5,13 c 0,-2.21 -1.79,-4 -4,-4 z" fill="#fff" stroke="#fff" stroke-width="4.5"/></g></g><g transform="translate(21.70,21.11) scale(0.6,0.61)"><path d="m 22.5,9 c -2.21,0 -4,1.79 -4,4 0,0.89 0.29,1.71 0.78,2.38 C 17.33,16.5 16,18.59 16,21 c 0,2.03 0.94,3.84 2.41,5.03 C 15.41,27.09 11,31.58 11,39.5 H 34 C 34,31.58 29.59,27.09 26.59,26.03 28.06,24.84 29,23.03 29,21 29,18.59 27.67,16.5 25.72,15.38 26.21,14.71 26.5,13.89 26.5,13 c 0,-2.21 -1.79,-4 -4,-4 z" fill="#000" stroke="#000" stroke-width="1.5"/></g><g transform="translate(45.17,21.11) scale(0.6,0.61)"><g opacity="0.85"><path d="m 22.5,9 c -2.21,0 -4,1.79 -4,4 0,0.89 0.29,1.71 0.78,2.38 C 17.33,16.5 16,18.59 16,21 c 0,2.03 0.94,3.84 2.41,5.03 C 15.41,27.09 11,31.58 11,39.5 H 34 C 34,31.58 29.59,27.09 26.59,26.03 28.06,24.84 29,23.03 29,21 29,18.59 27.67,16.5 25.72,15.38 26.21,14.71 26.5,13.89 26.5,13 c 0,-2.21 -1.79,-4 -4,-4 z" fill="#fff" stroke="#fff" stroke-width="4.5"/></g></g><g transform="translate(45.17,21.11) scale(0.6,0.61)"><path d="m 22.5,9 c -2.21,0 -4,1.79 -4,4 0,0.89 0.29,1.71 0.78,2.38 C 17.33,16.5 16,18.59 16,21 c 0,2.03 0.94,3.84 2.41,5.03 C 15.41,27.09 11,31.58 11,39.5 H 34 C 34,31.58 29.59,27.09 26.59,26.03 28.06,24.84 29,23.03 29,21 29,18.59 27.67,16.5 25.72,15.38 26.21,14.71 26.5,13.89 26.5,13 c 0,-2.21 -1.79,-4 -4,-4 z" fill="#000" stroke="#000" stroke-width="1.5"/></g><g transform="translate(68.64,21.11) scale(0.6,0.61)"><g opacity="0.85"><path d="m 22.5,9 c -2.21,0 -4,1.79 -4,4 0,0.89 0.29,1.71 0.78,2.38 C 17.33,16.5 16,18.59 16,21 c 0,2.03 0.94,3.84 2.41,5.03 C 15.41,27.09 11,31.58 11,39.5 H 34 C 34,31.58 29.59,27.09 26.59,26.03 28.06,24.84 29,23.03 29,21 29,18.59 27.67,16.5 25.72,15.38 26.21,14.71 26.5,13.89 26.5,13 c 0,-2.21 -1.79,-4 -4,-4 z" fill="#fff" stroke="#fff" stroke-width="4.5"/></g></g><g transform="translate(68.64,21.11) scale(0.6,0.61)"><path d="m 22.5,9 c -2.21,0 -4,1.79 -4,4 0,0.89 0.29,1.71 0.78,2.38 C 17.33,16.5 16,18.59 16,21 c 0,2.03 0.94,3.84 2.41,5.03 C 15.41,27.09 11,31.58 11,39.5 H 34 C 34,31.58 29.59,27.09 26.59,26.03 28.06,24.84 29,23.03 29,21 29,18.59 27.67,16.5 25.72,15.38 26.21,14.71 26.5,13.89 26.5,13 c 0,-2.21 -1.79,-4 -4,-4 z" fill="#000" stroke="#000" stroke-width="1.5"/></g><g transform="translate(92.11,21.11) scale(0.6,0.61)"><g opacity="0.85"><path d="m 22.5,9 c -2.21,0 -4,1.79 -4,4 0,0.89 0.29,1.71 0.78,2.38 C 17.33,16.5 16,18.59 16,21 c 0,2.03 0.94,3.84 2.41,5.03 C 15.41,27.09 11,31.58 11,39.5 H 34 C 34,31.58 29.59,27.09 26.59,26.03 28.06,24.84 29,23.03 29,21 29,18.59 27.67,16.5 25.72,15.38 26.21,14.71 26.5,13.89 26.5,13 c 0,-2.21 -1.79,-4 -4,-4 z" fill="#fff" stroke="#fff" stroke-width="4.5"/></g></g><g transform="translate(92.11,21.11) scale(0.6,0.61)"><path d="m 22.5,9 c -2.21,0 -4,1.79 -4,4 0,0.89 0.29,1.71 0.78,2.38 C 17.33,16.5 16,18.59 16,21 c 0,2.03 0.94,3.84 2.41,5.03 C 15.41,27.09 11,31.58 11,39.5 H 34 C 34,31.58 29.59,27.09 26.59,26.03 28.06,24.84 29,23.03 29,21 29,18.59 27.67,16.5 25.72,15.38 26.21,14.71 26.5,13.89 26.5,13 c 0,-2.21 -1.79,-4 -4,-4 z" fill="#000" stroke="#000" stroke-width="1.5"/></g><g transform="translate(115.58,21.11) scale(0.6,0.61)"><g opacity="0.85"><path d="m 22.5,9 c -2.21,0 -4,1.79 -4,4 0,0.89 0.29,1.71 0.78,2.38 C 17.33,16.5 16,18.59 16,21 c 0,2.03 0.94,3.84 2.41,5.03 C 15.41,27.09 11,31.58 11,39.5 H 34 C 34,31.58 29.59,27.09 26.59,26.03 28.06,24.84 29,23.03 29,21 29,18.59 27.67,16.5 25.72,15.38 26.21,14.71 26.5,13.89 26.5,13 c 0,-2.21 -1.79,-4 -4,-4 z" fill="#fff" stroke="#fff" stroke-width="4.5"/></g></g><g transform="translate(115.58,21.11) scale(0.6,0.61)"><path d="m 22.5,9 c -2.21,0 -4,1.79 -4,4 0,0.89 0.29,1.71 0.78,2.38 C 17.33,16.5 16,18.59 16,21 c 0,2.03 0.94,3.84 2.41,5.03 C 15.41,27.09 11,31.58 11,39.5 H 34 C 34,31.58 29.59,27.09 26.59,26.03 28.06,24.84 29,23.03 29,21 29,18.59 27.67,16.5 25.72,15.38 26.21,14.71 26.5,13.89 26.5,13 c 0,-2.21 -1.79,-4 -4,-4 z" fill="#000" stroke="#000" stroke-width="1.5"/></g><g transform="translate(139.06,21.11) scale(0.6,0.61)"><g opacity="0.85"><path d="m 22.5,9 c -2.21,0 -4,1.79 -4,4 0,0.89 0.29,1.71 0.78,2.38 C 17.33,16.5 16,18.59 16,21 c 0,2.03 0.94,3.84 2.41,5.03 C 15.41,27.09 11,31.58 11,39.5 H 34 C 34,31.58 29.59,27.09 26.59,26.03 28.06,24.84 29,23.03 29,21 29,18.59 27.67,16.5 25.72,15.38 26.21,14.71 26.5,13.89 26.5,13 c 0,-2.21 -1.79,-4 -4,-4 z" fill="#fff" stroke="#fff" stroke-width="4.5"/></g></g><g transform="translate(139.06,21.11) scale(0.6,0.61)"><path d="m 22.5,9 c -2.21,0 -4,1.79 -4,4 0,0.89 0.29,1.71 0.78,2.38 C 17.33,16.5 16,18.59 16,21 c 0,2.03 0.94,3.84 2.41,5.03 C 15.41,27.09 11,31.58 11,39.5 H 34 C 34,31.58 29.59,27.09 26.59,26.03 28.06,24.84 29,23.03 29,21 29,18.59 27.67,16.5 25.72,15.38 26.21,14.71 26.5,13.89 26.5,13 c 0,-2.21 -1.79,-4 -4,-4 z" fill="#000" stroke="#000" stroke-width="1.5"/></g><g transform="translate(162.52,21.11) scale(0.6,0.61)"><g opacity="0.85"><path d="m 22.5,9 c -2.21,0 -4,1.79 -4,4 0,0.89 0.29,1.71 0.78,2.38 C 17.33,16.5 16,18.59 16,21 c 0,2.03 0.94,3.84 2.41,5.03 C 15.41,27.09 11,31.58 11,39.5 H 34 C 34,31.58 29.59,27.09 26.59,26.03 28.06,24.84 29,23.03 29,21 29,18.59 27.67,16.5 25.72,15.38 26.21,14.71 26.5,13.89 26.5,13 c 0,-2.21 -1.79,-4 -4,-4 z" fill="#fff" stroke="#fff" stroke-width="4.5"/></g></g><g transform="translate(162.52,21.11) scale(0.6,0.61)"><path d="m 22.5,9 c -2.21,0 -4,1.79 -4,4 0,0.89 0.29,1.71 0.78,2.38 C 17.33,16.5 16,18.59 16,21 c 0,2.03 0.94,3.84 2.41,5.03 C 15.41,27.09 11,31.58 11,39.5 H 34 C 34,31.58 29.59,27.09 26.59,26.03 28.06,24.84 29,23.03 29,21 29,18.59 27.67,16.5 25.72,15.38 26.21,14.71 26.5,13.89 26.5,13 c 0,-2.21 -1.79,-4 -4,-4 z" fill="#000" stroke="#000" stroke-width="1.5"/></g><g transform="translate(-1.77,138.46) scale(0.6,0.61)"><path d="m 22.5,9 c -2.21,0 -4,1.79 -4,4 0,0.89 0.29,1.71 0.78,2.38 C 17.33,16.5 16,18.59 16,21 c 0,2.03 0.94,3.84 2.41,5.03 C 15.41,27.09 11,31.58 11,39.5 H 34 C 34,31.58 29.59,27.09 26.59,26.03 28.06,24.84 29,23.03 29,21 29,18.59 27.67,16.5 25.72,15.38 26.21,14.71 26.5,13.89 26.5,13 c 0,-2.21 -1.79,-4 -4,-4 z" fill="#e6e6e6" stroke="#111" stroke-width="1.8"/></g><g transform="translate(21.70,138.46) scale(0.6,0.61)"><path d="m 22.5,9 c -2.21,0 -4,1.79 -4,4 0,0.89 0.29,1.71 0.78,2.38 C 17.33,16.5 16,18.59 16,21 c 0,2.03 0.94,3.84 2.41,5.03 C 15.41,27.09 11,31.58 11,39.5 H 34 C 34,31.58 29.59,27.09 26.59,26.03 28.06,24.84 29,23.03 29,21 29,18.59 27.67,16.5 25.72,15.38 26.21,14.71 26.5,13.89 26.5,13 c 0,-2.21 -1.79,-4 -4,-4 z" fill="#e6e6e6" stroke="#111" stroke-width="1.8"/></g><g transform="translate(45.17,138.46) scale(0.6,0.61)"><path d="m 22.5,9 c -2.21,0 -4,1.79 -4,4 0,0.89 0.29,1.71 0.78,2.38 C 17.33,16.5 16,18.59 16,21 c 0,2.03 0.94,3.84 2.41,5.03 C 15.41,27.09 11,31.58 11,39.5 H 34 C 34,31.58 29.59,27.09 26.59,26.03 28.06,24.84 29,23.03 29,21 29,18.59 27.67,16.5 25.72,15.38 26.21,14.71 26.5,13.89 26.5,13 c 0,-2.21 -1.79,-4 -4,-4 z" fill="#e6e6e6" stroke="#111" stroke-width="1.8"/></g><g transform="translate(68.64,138.46) scale(0.6,0.61)"><path d="m 22.5,9 c -2.21,0 -4,1.79 -4,4 0,0.89 0.29,1.71 0.78,2.38 C 17.33,16.5 16,18.59 16,21 c 0,2.03 0.94,3.84 2.41,5.03 C 15.41,27.09 11,31.58 11,39.5 H 34 C 34,31.58 29.59,27.09 26.59,26.03 28.06,24.84 29,23.03 29,21 29,18.59 27.67,16.5 25.72,15.38 26.21,14.71 26.5,13.89 26.5,13 c 0,-2.21 -1.79,-4 -4,-4 z" fill="#e6e6e6" stroke="#111" stroke-width="1.8"/></g><g transform="translate(92.11,138.46) scale(0.6,0.61)"><path d="m 22.5,9 c -2.21,0 -4,1.79 -4,4 0,0.89 0.29,1.71 0.78,2.38 C 17.33,16.5 16,18.59 16,21 c 0,2.03 0.94,3.84 2.41,5.03 C 15.41,27.09 11,31.58 11,39.5 H 34 C 34,31.58 29.59,27.09 26.59,26.03 28.06,24.84 29,23.03 29,21 29,18.59 27.67,16.5 25.72,15.38 26.21,14.71 26.5,13.89 26.5,13 c 0,-2.21 -1.79,-4 -4,-4 z" fill="#e6e6e6" stroke="#111" stroke-width="1.8"/></g><g transform="translate(115.58,138.46) scale(0.6,0.61)"><path d="m 22.5,9 c -2.21,0 -4,1.79 -4,4 0,0.89 0.29,1.71 0.78,2.38 C 17.33,16.5 16,18.59 16,21 c 0,2.03 0.94,3.84 2.41,5.03 C 15.41,27.09 11,31.58 11,39.5 H 34 C 34,31.58 29.59,27.09 26.59,26.03 28.06,24.84 29,23.03 29,21 29,18.59 27.67,16.5 25.72,15.38 26.21,14.71 26.5,13.89 26.5,13 c 0,-2.21 -1.79,-4 -4,-4 z" fill="#e6e6e6" stroke="#111" stroke-width="1.8"/></g><g transform="translate(139.06,138.46) scale(0.6,0.61)"><path d="m 22.5,9 c -2.21,0 -4,1.79 -4,4 0,0.89 0.29,1.71 0.78,2.38 C 17.33,16.5 16,18.59 16,21 c 0,2.03 0.94,3.84 2.41,5.03 C 15.41,27.09 11,31.58 11,39.5 H 34 C 34,31.58 29.59,27.09 26.59,26.03 28.06,24.84 29,23.03 29,21 29,18.59 27.67,16.5 25.72,15.38 26.21,14.71 26.5,13.89 26.5,13 c 0,-2.21 -1.79,-4 -4,-4 z" fill="#e6e6e6" stroke="#111" stroke-width="1.8"/></g><g transform="translate(162.52,138.46) scale(0.6,0.61)"><path d="m 22.5,9 c -2.21,0 -4,1.79 -4,4 0,0.89 0.29,1.71 0.78,2.38 C 17.33,16.5 16,18.59 16,21 c 0,2.03 0.94,3.84 2.41,5.03 C 15.41,27.09 11,31.58 11,39.5 H 34 C 34,31.58 29.59,27.09 26.59,26.03 28.06,24.84 29,23.03 29,21 29,18.59 27.67,16.5 25.72,15.38 26.21,14.71 26.5,13.89 26.5,13 c 0,-2.21 -1.79,-4 -4,-4 z" fill="#e6e6e6" stroke="#111" stroke-width="1.8"/></g><g transform="translate(-1.54,161.12) scale(0.59,0.65)"><g fill="#e6e6e6" stroke="#111" stroke-width="1.8" stroke-linejoin="round"><path d="M9,39 H36 V36 H9Z"/><path d="M12,36 V32 H33 V36Z"/><path d="M11,14 V9 H15 V11 H20 V9 H25 V11 H30 V9 H34 V14"/><path d="M34,14 L31,17 H14 L11,14"/><path d="M31,17 V29.5 H14 V17"/><path d="M31,29.5 L32.5,32 H12.5 L14,29.5"/><path d="M11,14 H34" fill="none"/></g></g><g transform="translate(23.28,163.38) scale(0.53,0.58)"><g stroke="#111" stroke-width="1.8" stroke-linejoin="round" stroke-linecap="round"><path d="M 22,10 C 32.5,11 38.5,18 38,39 L 15,39 C 15,30 25,32.5 23,18" fill="#e6e6e6"/><path d="M 24,18 C 24.38,20.91 18.45,25.37 16,27 C 13,29 13.18,31.34 11,31 C 9.958,30.06 12.41,27.96 11,28 C 10,28 11.19,29.23 10,30 C 9,30 5.997,31 6,26 C 6,24 12,14 12,14 C 12,14 13.89,12.1 14,10.5 C 13.27,9.506 13.5,8.5 13.5,7.5 C 14.5,6.5 16.5,10 16.5,10 L 18.5,10 C 18.5,10 19.28,8.008 21,7 C 22,7 22,10 22,10" fill="#e6e6e6"/><circle cx="9" cy="25.5" r="0.6" fill="#000"/><ellipse cx="14.5" cy="15.5" rx="0.6" ry="1.5" transform="rotate(30 14.5 15.5)" fill="#000"/></g></g><g transform="translate(45.40,163.82) scale(0.59,0.58)"><g stroke="#111" stroke-width="1.8" stroke-linejoin="round" stroke-linecap="round"><g fill="#e6e6e6"><path d="M 9,36 C 12.39,35.03 19.11,36.43 22.5,34 C 25.89,36.43 32.61,35.03 36,36 C 36,36 37.65,36.54 39,38 C 38.32,38.97 37.35,38.99 36,38.5 C 32.61,37.53 25.89,38.96 22.5,37.5 C 19.11,38.96 12.39,37.53 9,38.5 C 7.65,38.99 6.68,38.97 6,38 C 7.35,36.54 9,36 9,36 z"/><path d="M 15,32 C 17.5,34.5 27.5,34.5 30,32 C 30.5,30.5 30,30 30,30 C 30,27.5 27.5,26 27.5,26 C 33,24.5 33.5,14.5 22.5,10.5 C 11.5,14.5 12,24.5 17.5,26 C 17.5,26 15,27.5 15,30 C 15,30 14.5,30.5 15,32 z"/><circle cx="22.5" cy="8" r="2.5"/></g><path d="M 17.5,26 L 27.5,26 M 15,30 L 30,30 M 22.5,15.5 L 22.5,20.5 M 20,18 L 25,18" fill="none"/></g></g><g transform="translate(70.22,164.89) scale(0.53,0.52)"><g fill="#e6e6e6" stroke="#111" stroke-width="1.8" stroke-linejoin="round"><path d="M 9,26 C 17.5,24.5 30,24.5 36,26 L 38.5,13.5 L 31,25 L 30.7,10.9 L 25.5,24.5 L 22.5,10 L 19.5,24.5 L 14.3,10.9 L 14,25 L 6.5,13.5 L 9,26 z"/><path d="M 9,26 C 9,28 10.5,28 11.5,30 C 12.5,31.5 12.5,31 12,33.5 C 10.5,34.5 11,36 11,36 C 9.5,37.5 11,38.5 11,38.5 C 17.5,39.5 27.5,39.5 34,38.5 C 34,38.5 35.5,37.5 34,36 C 34,36 34.5,34.5 33,33.5 C 32.5,31 32.5,31.5 33.5,30 C 34.5,28 36,28 36,26 C 27.5,24.5 17.5,24.5 9,26 z"/><path d="M 11.5,30 C 15,29 30,29 33.5,30" fill="none"/><path d="M 12,33.5 C 18,32.5 27,32.5 33,33.5" fill="none"/><circle cx="6" cy="12" r="2"/><circle cx="14" cy="9" r="2"/><circle cx="22.5" cy="8" r="2"/><circle cx="31" cy="9" r="2"/><circle cx="39" cy="12" r="2"/></g></g><g transform="translate(93.69,163.61) scale(0.53,0.57)"><g stroke="#111" stroke-width="1.8" stroke-linejoin="round" stroke-linecap="round"><path d="M 22.5,11.63 L 22.5,6 M 20,8 L 25,8" fill="none"/><path d="M 22.5,25 C 22.5,25 27,17.5 25.5,14.5 C 25.5,14.5 24.5,12 22.5,12 C 20.5,12 19.5,14.5 19.5,14.5 C 18,17.5 22.5,25 22.5,25" fill="#e6e6e6"/><path d="M 12.5,37 C 18,40.5 27,40.5 32.5,37 L 32.5,30 C 32.5,30 41.5,25.5 38.5,19.5 C 34.5,13 25,16 22.5,23.5 L 22.5,27 L 22.5,23.5 C 20,16 10.5,13 6.5,19.5 C 3.5,25.5 12.5,30 12.5,30 L 12.5,37" fill="#e6e6e6"/><path d="M 12.5,30 C 18,27 27,27 32.5,30 M 12.5,33.5 C 18,30.5 27,30.5 32.5,33.5 M 12.5,37 C 18,34 27,34 32.5,37" fill="none"/></g></g><g transform="translate(115.81,163.82) scale(0.59,0.58)"><g stroke="#111" stroke-width="1.8" stroke-linejoin="round" stroke-linecap="round"><g fill="#e6e6e6"><path d="M 9,36 C 12.39,35.03 19.11,36.43 22.5,34 C 25.89,36.43 32.61,35.03 36,36 C 36,36 37.65,36.54 39,38 C 38.32,38.97 37.35,38.99 36,38.5 C 32.61,37.53 25.89,38.96 22.5,37.5 C 19.11,38.96 12.39,37.53 9,38.5 C 7.65,38.99 6.68,38.97 6,38 C 7.35,36.54 9,36 9,36 z"/><path d="M 15,32 C 17.5,34.5 27.5,34.5 30,32 C 30.5,30.5 30,30 30,30 C 30,27.5 27.5,26 27.5,26 C 33,24.5 33.5,14.5 22.5,10.5 C 11.5,14.5 12,24.5 17.5,26 C 17.5,26 15,27.5 15,30 C 15,30 14.5,30.5 15,32 z"/><circle cx="22.5" cy="8" r="2.5"/></g><path d="M 17.5,26 L 27.5,26 M 15,30 L 30,30 M 22.5,15.5 L 22.5,20.5 M 20,18 L 25,18" fill="none"/></g></g><g transform="translate(140.63,163.38) scale(0.53,0.58)"><g stroke="#111" stroke-width="1.8" stroke-linejoin="round" stroke-linecap="round"><path d="M 22,10 C 32.5,11 38.5,18 38,39 L 15,39 C 15,30 25,32.5 23,18" fill="#e6e6e6"/><path d="M 24,18 C 24.38,20.91 18.45,25.37 16,27 C 13,29 13.18,31.34 11,31 C 9.958,30.06 12.41,27.96 11,28 C 10,28 11.19,29.23 10,30 C 9,30 5.997,31 6,26 C 6,24 12,14 12,14 C 12,14 13.89,12.1 14,10.5 C 13.27,9.506 13.5,8.5 13.5,7.5 C 14.5,6.5 16.5,10 16.5,10 L 18.5,10 C 18.5,10 19.28,8.008 21,7 C 22,7 22,10 22,10" fill="#e6e6e6"/><circle cx="9" cy="25.5" r="0.6" fill="#000"/><ellipse cx="14.5" cy="15.5" rx="0.6" ry="1.5" transform="rotate(30 14.5 15.5)" fill="#000"/></g></g><g transform="translate(162.75,161.12) scale(0.59,0.65)"><g fill="#e6e6e6" stroke="#111" stroke-width="1.8" stroke-linejoin="round"><path d="M9,39 H36 V36 H9Z"/><path d="M12,36 V32 H33 V36Z"/><path d="M11,14 V9 H15 V11 H20 V9 H25 V11 H30 V9 H34 V14"/><path d="M34,14 L31,17 H14 L11,14"/><path d="M31,17 V29.5 H14 V17"/><path d="M31,29.5 L32.5,32 H12.5 L14,29.5"/><path d="M11,14 H34" fill="none"/></g></g><text x="1" y="5.20" font-family="Liberation Sans" font-size="4.6" fill="#956240" opacity="0.6">8</text><text x="1" y="28.67" font-family="Liberation Sans" font-size="4.6" fill="#fad5aa" opacity="0.6">7</text><text x="1" y="52.14" font-family="Liberation Sans" font-size="4.6" fill="#956240" opacity="0.6">6</text><text x="1" y="75.61" font-family="Liberation Sans" font-size="4.6" fill="#fad5aa" opacity="0.6">5</text><text x="1" y="99.08" font-family="Liberation Sans" font-size="4.6" fill="#956240" opacity="0.6">4</text><text x="1" y="122.55" font-family="Liberation Sans" font-size="4.6" fill="#fad5aa" opacity="0.6">3</text><text x="1" y="146.02" font-family="Liberation Sans" font-size="4.6" fill="#956240" opacity="0.6">2</text><text x="1" y="169.49" font-family="Liberation Sans" font-size="4.6" fill="#fad5aa" opacity="0.6">1</text><text x="19.97" y="186.56" font-family="Liberation Sans" font-size="4.6" fill="#fad5aa" opacity="0.6">a</text><text x="43.44" y="186.56" font-family="Liberation Sans" font-size="4.6" fill="#956240" opacity="0.6">b</text><text x="66.91" y="186.56" font-family="Liberation Sans" font-size="4.6" fill="#fad5aa" opacity="0.6">c</text><text x="90.38" y="186.56" font-family="Liberation Sans" font-size="4.6" fill="#956240" opacity="0.6">d</text><text x="113.85" y="186.56" font-family="Liberation Sans" font-size="4.6" fill="#fad5aa" opacity="0.6">e</text><text x="137.32" y="186.56" font-family="Liberation Sans" font-size="4.6" fill="#956240" opacity="0.6">f</text><text x="160.79" y="186.56" font-family="Liberation Sans" font-size="4.6" fill="#fad5aa" opacity="0.6">g</text><text x="184.26" y="186.56" font-family="Liberation Sans" font-size="4.6" fill="#956240" opacity="0.6">h</text></svg>
<svg style="left:691.5px;top:242.5px" width="6" height="9" viewBox="0 0 6 9"><path d="M0.5 0.5 V7.5 L2.3 5.8 L3.6 8.5 L4.8 8 L3.6 5.3 H6Z" fill="#111" stroke="#fff" stroke-width="0.6"/></svg>
<div style="position:absolute;left:828.2px;top:29.4px;width:6.8px;height:488px;background:#f0f0f0"></div>
<svg style="left:829.5px;top:35px" width="5" height="5" viewBox="0 0 5 5"><path d="M0.5 4.5 C1 1.5 3 0.5 4.5 1.5 L3.5 4.5" fill="none" stroke="#555" stroke-width="0.8"/></svg>
<div class="t v" style="left:835.3000000000001px;top:42px;font-size:6.2px;color:#1a1a1a;transform-origin:0 0;transform:rotate(90deg)">Gradle</div>
<svg style="left:829.3px;top:74px" width="5.5" height="5" viewBox="0 0 5.5 5"><rect x="0.4" y="0.4" width="4.5" height="4" fill="none" stroke="#555" stroke-width="0.7"/></svg>
<div class="t v" style="left:835.3000000000001px;top:80.9px;font-size:6.2px;color:#1a1a1a;transform-origin:0 0;transform:rotate(90deg)">Device Manager</div>
<svg style="left:829.3px;top:404.5px" width="5.5" height="5" viewBox="0 0 5.5 5"><rect x="0.4" y="0.4" width="4.5" height="4" fill="none" stroke="#555" stroke-width="0.7"/></svg>
<div class="t v" style="left:835.3000000000001px;top:411.7px;font-size:6.2px;color:#1a1a1a;transform-origin:0 0;transform:rotate(90deg)">Device File Explorer</div>
<svg style="left:829.3px;top:478.5px" width="5.5" height="5" viewBox="0 0 5.5 5"><rect x="0.4" y="0.4" width="4.5" height="4" fill="none" stroke="#555" stroke-width="0.7"/></svg>
<div class="t v" style="left:835.3000000000001px;top:486.2px;font-size:6.2px;color:#1a1a1a;transform-origin:0 0;transform:rotate(90deg)">Emulator</div>
<div style="position:absolute;left:210px;top:509.2px;width:618px;height:8px;background:#f2f2f2"></div>
<div style="position:absolute;left:214px;top:511px;width:168px;height:3.8px;background:#b9b9b9;border-radius:2px"></div>
<div style="position:absolute;left:0px;top:517px;width:835px;height:0.6px;background:#d4d4d4"></div>
<div style="position:absolute;left:0px;top:517.6px;width:835px;height:10.6px;background:#f0f0f0"></div>
<div style="position:absolute;left:0px;top:528px;width:835px;height:0.6px;background:#dadada"></div>
<div style="position:absolute;left:0px;top:528.6px;width:835px;height:10.4px;background:#f0f0f0"></div>
<svg style="left:13px;top:519.5px" width="5" height="6" viewBox="0 0 5 6"><path d="M1 0 V6 M1 3 L4 1 M4 0 V2" stroke="#666" stroke-width="0.8" fill="none"/></svg>
<div class="t " style="left:22px;top:519.4px;font-size:6.0px;color:#2b2b2b;">Git</div>
<svg style="left:40.5px;top:519.5px" width="5.5" height="6" viewBox="0 0 5.5 6"><path d="M0 0.5 H5.5 M0 2.5 H5.5 M0 4.5 H5.5" stroke="#666" stroke-width="0.8"/></svg>
<div class="t " style="left:49.7px;top:519.4px;font-size:6.0px;color:#2b2b2b;">TODO</div>
<svg style="left:78.8px;top:519.3px" width="6" height="6" viewBox="0 0 6 6"><circle cx="3" cy="3" r="2.8" fill="#555"/><path d="M3 1.3 V3.5" stroke="#fff" stroke-width="0.8"/><circle cx="3" cy="4.6" r="0.45" fill="#fff"/></svg>
<div class="t " style="left:87.9px;top:519.4px;font-size:5.87px;color:#2b2b2b;">Problems</div>
<svg style="left:124.8px;top:519.5px" width="6" height="6" viewBox="0 0 6 6"><rect x="0.4" y="0.4" width="5.2" height="5.2" fill="#555"/><path d="M1.3 1.8 L2.6 3 L1.3 4.2" stroke="#fff" stroke-width="0.6" fill="none"/></svg>
<div class="t " style="left:134px;top:519.4px;font-size:6.09px;color:#2b2b2b;">Terminal</div>
<svg style="left:168px;top:519.5px" width="6" height="6" viewBox="0 0 6 6"><path d="M0.5 1 L3 0.3 L4 1.5 L3 2.3Z" fill="#666"/><path d="M2.5 1.5 L5.5 5.5" stroke="#666" stroke-width="1"/></svg>
<div class="t " style="left:176.3px;top:519.4px;font-size:6.2px;color:#2b2b2b;">Build</div>
<svg style="left:201px;top:519.8px" width="5.5" height="5.5" viewBox="0 0 5.5 5.5"><path d="M0 0.5 H5.5 M1.5 2.5 H5.5 M1.5 4.5 H4" stroke="#666" stroke-width="0.8"/></svg>
<div class="t " style="left:209.5px;top:519.4px;font-size:6.2px;color:#2b2b2b;">Logcat</div>
<svg style="left:239px;top:519.8px" width="6" height="5" viewBox="0 0 6 5"><path d="M0.5 4.5 A2.8 2.8 0 0 1 5.5 4.5" fill="none" stroke="#666" stroke-width="0.9"/><path d="M3 4 L4.2 1.8" stroke="#666" stroke-width="0.8"/></svg>
<div class="t " style="left:248px;top:519.4px;font-size:6.2px;color:#2b2b2b;">Profiler</div>
<svg style="left:280px;top:519.5px" width="5.5" height="6" viewBox="0 0 5.5 6"><rect x="1" y="0.5" width="3.5" height="5" rx="1.5" fill="#666"/><path d="M0 3 H5.5" stroke="#666" stroke-width="0.7"/></svg>
<div class="t " style="left:288.8px;top:519.4px;font-size:6.18px;color:#2b2b2b;">App Inspection</div>
<svg style="left:716.8px;top:519.2px" width="6.2" height="6.2" viewBox="0 0 6.2 6.2"><circle cx="3.1" cy="3.1" r="3.1" fill="#3aa85a"/><path d="M3.3 1.5 V4.8" stroke="#fff" stroke-width="0.8"/></svg>
<div class="t " style="left:726px;top:519.4px;font-size:6.08px;color:#2b2b2b;">Event Log</div>
<svg style="left:765.5px;top:519.3px" width="7" height="6" viewBox="0 0 7 6"><rect x="0.4" y="0.4" width="5" height="4" fill="none" stroke="#666" stroke-width="0.7"/><circle cx="4.8" cy="3.8" r="1.5" fill="#fff" stroke="#666" stroke-width="0.7"/><path d="M5.8 4.8 L6.8 5.8" stroke="#666" stroke-width="0.7"/></svg>
<div class="t " style="left:774px;top:519.4px;font-size:6.33px;color:#2b2b2b;">Layout Inspector</div>
<svg style="left:3.3px;top:530.8px" width="6" height="6" viewBox="0 0 6 6"><rect x="0.4" y="0.4" width="5.2" height="5.2" rx="0.8" fill="none" stroke="#777" stroke-width="0.7"/></svg>
<div class="t " style="left:15.2px;top:530.3px;font-size:6.2px;color:#2b2b2b;">Compose Preview refresh: refreshing Compose previews total elapsed time was 4 s 686 ms (moments ago)</div>
<div class="t " style="left:639.4px;top:530.3px;font-size:6.04px;color:#2b2b2b;">31:1 (37 chars)</div>
<div class="t " style="left:686px;top:530.3px;font-size:6.0px;color:#2b2b2b;">LF</div>
<div class="t " style="left:698.4px;top:530.3px;font-size:6.0px;color:#2b2b2b;">UTF-8</div>
<div class="t " style="left:722.4px;top:530.3px;font-size:6.3px;color:#2b2b2b;">4 spaces</div>
<svg style="left:753.5px;top:530.8px" width="5" height="6.5" viewBox="0 0 5 6.5"><path d="M1 0 V6.5 M1 4 C3 3.5 4 2.5 4 0" stroke="#555" stroke-width="0.8" fill="none"/></svg>
<div class="t " style="left:761px;top:530.3px;font-size:6.68px;color:#2b2b2b;">master</div>
<svg style="left:786.5px;top:531px" width="6" height="6" viewBox="0 0 6 6"><rect x="0.5" y="2.5" width="4.5" height="3.5" fill="#666"/><path d="M1.5 2.5 V1.5 A1.3 1.3 0 0 1 4 1.5" fill="none" stroke="#666" stroke-width="0.7"/></svg>
<svg style="left:799.5px;top:530.6px" width="6.5" height="6.5" viewBox="0 0 6.5 6.5"><circle cx="3.25" cy="3.25" r="3.1" fill="#e53850"/><path d="M3.25 1.6 V4.7" stroke="#fff" stroke-width="0.7"/></svg>
<svg style="left:812px;top:530.3px" width="7" height="7" viewBox="0 0 7 7"><circle cx="3.5" cy="3.5" r="3.3" fill="#f0b730"/><circle cx="2.3" cy="2.8" r="0.5" fill="#6b4a10"/><circle cx="4.7" cy="2.8" r="0.5" fill="#6b4a10"/><path d="M2 5.3 Q3.5 4.2 5 5.3" fill="none" stroke="#6b4a10" stroke-width="0.5"/></svg>
<svg style="left:825px;top:530.3px" width="7" height="7" viewBox="0 0 7 7"><circle cx="3.5" cy="3.5" r="3.3" fill="#f0b730"/><circle cx="2.3" cy="2.8" r="0.5" fill="#6b4a10"/><circle cx="4.7" cy="2.8" r="0.5" fill="#6b4a10"/><path d="M2 5.3 Q3.5 4.2 5 5.3" fill="none" stroke="#6b4a10" stroke-width="0.5"/></svg></body></html>
